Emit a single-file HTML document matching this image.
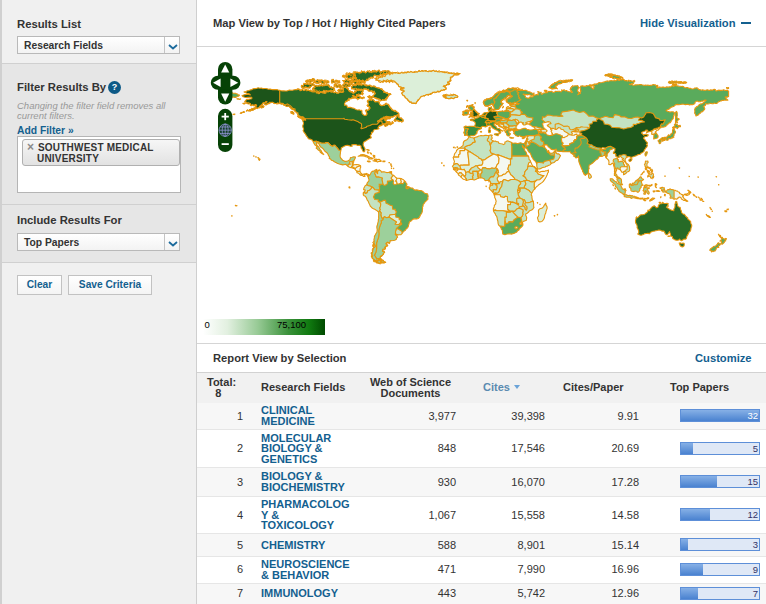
<!DOCTYPE html>
<html><head><meta charset="utf-8">
<style>
*{box-sizing:border-box;margin:0;padding:0}
html,body{width:766px;height:604px;overflow:hidden;background:#fff}
body{font-family:"Liberation Sans",Arial,sans-serif;font-size:11px;color:#333;position:relative}
#side{position:absolute;left:0;top:0;width:197px;height:604px;background:#f0f0f0;border-left:2px solid #d0d0d0;border-right:1px solid #cfcfcf}
.sec{position:absolute;left:0;width:194px}
.h{position:absolute;left:15px;font-weight:bold;font-size:11.3px;color:#333;white-space:nowrap}
.sel{position:absolute;left:15px;width:163px;height:18px;border:1px solid #b9b9b9;background:linear-gradient(#fff,#f3f3f3);font-weight:bold;font-size:10.3px;line-height:17px;padding-left:6px;color:#333}
.sel i{position:absolute;right:0;top:0;width:15px;height:16px;border-left:1px solid #c4c4c4}
.sel i svg{position:absolute;left:3px;top:7px}
.btn{position:absolute;height:20px;border:1px solid #c2c2c2;background:linear-gradient(#fff,#f4f4f4);color:#13608f;font-weight:bold;font-size:10.2px;line-height:18px;text-align:center}
#main{position:absolute;left:197px;top:0;width:569px;height:604px;background:#fff}
.t{position:absolute;font-weight:bold;font-size:11.2px;white-space:nowrap;color:#333}
.lnk{color:#13608f}
.hr{position:absolute;left:0;width:569px;height:1px;background:#d5d5d5}
table{position:absolute;left:0;top:372px;width:569px;border-collapse:collapse;font-size:11px}
th{font-weight:bold;background:#f1f1f1;height:30px;border-top:1px solid #d2d2d2;line-height:11px;vertical-align:middle;text-align:center}
td{vertical-align:middle;border-bottom:1px solid #e6e6e6;line-height:10.5px;font-size:11px}
tr.o td{background:#f7f7f7}
td.n{text-align:right}
td a{color:#13608f;font-weight:bold;text-decoration:none;font-size:11px}
.bar{position:relative;width:80px;height:13px;border:1px solid #5d8fd8;background:#dfe8f6;margin-left:35px}
.bar b{position:absolute;left:0;top:0;height:11px;background:linear-gradient(#86b0e6,#4a82d0)}
.bar span{position:absolute;right:1px;top:0;font-size:9.5px;line-height:12px;color:#336;font-weight:normal}
</style></head><body>
<div id="side">
 <div class="sec" style="top:0;height:64px;background:#f0f0f0;border-bottom:1px solid #d0d0d0"></div>
 <div class="sec" style="top:64px;height:141px;background:#e6e6e6;border-bottom:1px solid #d0d0d0"></div>
 <div class="sec" style="top:205px;height:58px;background:#e6e6e6;border-bottom:1px solid #d0d0d0"></div>
 <div class="h" style="top:18px">Results List</div>
 <div class="sel" style="top:36px">Research Fields<i><svg width="10" height="6" viewBox="0 0 10 6"><path d="M1 1 L5 4.5 L9 1" fill="none" stroke="#1b6a9c" stroke-width="1.8"/></svg></i></div>
 <div class="h" style="top:81px">Filter Results By</div>
 <div style="position:absolute;left:106px;top:81px;width:13px;height:13px;border-radius:7px;background:#0d5a87;color:#fff;font-weight:bold;font-size:9px;line-height:13px;text-align:center">?</div>
 <div style="position:absolute;left:15px;top:101px;width:170px;font-style:italic;font-size:9.5px;line-height:10px;color:#999">Changing the filter field removes all current filters.</div>
 <div style="position:absolute;left:15px;top:125px;font-weight:bold;font-size:10.3px;color:#13608f">Add Filter »</div>
 <div style="position:absolute;left:15px;top:136px;width:164px;height:57px;background:#fff;border:1px solid #b5b5b5"></div>
 <div style="position:absolute;left:20px;top:139px;width:158px;height:27px;border:1px solid #b0b0b0;border-radius:3px;background:linear-gradient(#f6f6f6,#e2e2e2);font-weight:bold;font-size:10px;line-height:11px;color:#333;padding:2px 0 0 15px;letter-spacing:0.2px">SOUTHWEST MEDICAL<br><span style="margin-left:-1px">UNIVERSITY</span><span style="position:absolute;left:4px;top:2px;color:#8a8a8a;font-size:12px;font-weight:bold">×</span></div>
 <div class="h" style="top:214px">Include Results For</div>
 <div class="sel" style="top:233px">Top Papers<i><svg width="10" height="6" viewBox="0 0 10 6"><path d="M1 1 L5 4.5 L9 1" fill="none" stroke="#1b6a9c" stroke-width="1.8"/></svg></i></div>
 <div class="btn" style="left:15px;top:275px;width:45px">Clear</div>
 <div class="btn" style="left:66px;top:275px;width:84px">Save Criteria</div>
</div>
<div id="main">
 <div class="t" style="left:16px;top:17px">Map View by Top / Hot / Highly Cited Papers</div>
 <div class="t lnk" style="left:443px;top:17px">Hide Visualization</div>
 <div style="position:absolute;left:544px;top:22px;width:10px;height:2px;background:#13608f"></div>
 <div class="hr" style="top:46px"></div>
 <svg width="766" height="604" viewBox="0 0 766 604" style="position:absolute;left:-197px;top:0" stroke="#e6970e" stroke-width="1.1" stroke-linejoin="round"><defs><path id="p1" d="M242.0 95.7L243.6 95.0L245.1 94.6L246.9 94.5L248.6 94.4L250.4 94.9L249.4 93.9L248.3 93.5L246.8 93.2L245.3 92.6L244.1 91.9L245.8 91.7L247.3 90.7L249.0 90.6L250.4 89.9L251.7 89.7L253.2 88.8L254.8 88.6L256.5 88.5L258.1 87.8L259.7 88.3L261.4 88.0L262.6 88.6L264.3 88.5L265.9 88.5L267.2 88.7L268.4 89.2L269.9 89.1L271.3 89.4L272.7 89.6L274.0 89.6L275.5 89.5L276.8 89.6L278.2 90.1L279.7 90.2L281.2 90.7L282.5 90.9L283.9 90.8L285.3 91.0L286.9 91.0L288.1 90.5L289.6 90.1L290.9 90.2L292.6 90.2L294.3 89.7L295.8 89.5L296.9 89.8L297.9 88.8L298.8 89.3L299.3 89.2L300.2 90.8L301.4 90.3L302.1 89.4L303.8 90.4L304.9 89.9L305.9 89.1L306.8 89.8L307.7 90.4L309.1 90.5L309.7 90.7L310.9 90.0L311.8 91.8L313.1 90.3L314.3 91.8L315.4 91.2L316.3 90.9L317.5 92.1L316.1 92.7L317.3 91.6L318.3 93.4L319.0 93.7L319.9 92.9L320.9 92.3L321.8 91.5L323.1 92.6L324.0 93.3L325.4 92.9L325.9 93.1L325.9 91.6L326.7 90.5L327.8 91.0L328.7 91.3L329.7 90.9L331.1 91.3L332.4 91.1L333.0 91.7L334.3 92.7L335.5 91.8L336.6 93.2L337.4 93.0L337.8 93.3L339.2 92.7L339.7 92.1L340.6 91.6L341.9 92.2L342.7 92.0L342.6 91.4L343.4 90.3L343.5 88.9L343.3 88.5L342.0 88.0L342.8 86.7L344.1 86.9L345.1 87.3L346.1 87.6L346.9 88.6L348.2 88.8L348.2 89.6L348.9 90.5L350.3 90.7L350.3 91.7L351.2 91.8L352.3 91.5L352.9 93.0L353.8 93.0L354.9 92.7L354.5 91.3L356.0 91.7L356.6 90.3L357.3 89.9L358.2 90.6L359.0 89.7L360.7 90.9L361.5 89.9L362.1 89.8L363.2 90.8L362.9 91.7L361.5 92.4L362.7 93.0L363.2 93.4L362.5 94.9L361.4 94.0L360.1 94.8L358.6 94.9L357.4 95.2L356.6 94.5L356.6 95.6L356.0 96.7L354.5 96.2L353.3 96.7L352.4 95.5L353.3 96.5L354.6 97.0L355.2 97.3L354.2 98.0L353.1 98.0L352.6 98.2L351.5 98.3L350.3 98.7L348.8 98.9L348.7 100.2L347.5 100.0L346.9 101.5L345.5 101.4L345.2 102.7L344.5 103.5L344.5 105.2L345.7 105.1L346.8 105.3L347.2 106.5L347.5 107.7L348.8 107.3L350.3 107.4L352.1 107.9L353.8 108.3L355.2 109.1L356.6 109.7L358.0 110.0L359.2 109.8L360.6 110.5L361.8 110.3L362.0 111.7L362.0 113.2L362.8 114.2L363.6 114.9L365.0 115.5L366.4 115.1L367.0 113.9L366.7 112.7L366.4 111.5L365.4 110.8L366.1 109.8L367.4 110.2L368.4 110.1L369.2 109.3L369.0 108.2L369.8 107.4L368.8 106.6L367.6 106.4L367.1 105.2L368.2 105.0L368.7 103.6L368.0 103.1L367.8 102.1L367.2 101.2L367.8 100.2L369.2 100.3L370.3 99.4L371.3 100.3L372.2 99.1L373.7 100.0L374.6 101.6L375.9 101.9L376.9 101.4L378.0 101.6L379.4 102.1L379.5 103.2L379.7 104.5L380.7 105.0L381.4 105.6L382.3 105.4L383.8 104.9L384.6 105.2L385.0 103.9L386.0 103.1L386.1 104.2L387.4 104.2L388.6 104.7L389.1 105.2L389.5 106.3L389.9 107.6L390.9 108.3L391.6 108.4L391.8 109.9L393.0 110.0L393.8 110.8L394.6 111.2L395.8 111.0L396.8 111.6L397.2 112.2L398.3 112.8L398.9 113.7L398.6 115.0L397.5 114.8L396.5 115.2L395.1 115.7L394.1 116.2L393.0 117.1L391.8 117.1L390.7 117.6L389.6 117.3L388.8 116.9L387.5 116.6L386.6 116.2L386.0 116.5L384.7 117.8L383.9 117.1L383.0 117.9L382.5 118.3L381.1 118.4L381.2 120.0L379.7 120.1L378.5 120.7L377.6 121.6L377.8 120.9L379.0 120.8L380.3 120.2L381.1 119.6L381.9 119.2L382.7 118.6L383.9 118.5L385.1 119.2L385.7 117.9L386.7 118.5L387.0 119.6L385.8 120.3L384.6 120.1L386.0 120.7L386.3 121.6L386.7 122.6L387.5 123.3L389.1 123.0L390.2 123.2L391.6 123.4L392.3 122.4L392.3 121.5L392.9 122.4L393.3 122.9L392.7 123.6L391.6 124.0L390.5 124.9L389.2 124.3L388.1 124.8L387.3 125.1L386.1 126.0L385.3 126.4L384.3 125.4L384.8 124.3L385.5 123.8L386.7 123.9L385.6 123.3L384.6 124.0L383.2 124.1L382.5 125.0L381.8 125.1L380.9 125.9L379.5 125.4L379.0 126.1L378.0 127.6L379.0 128.7L376.9 129.3L374.8 129.5L373.4 130.4L373.1 131.9L372.0 132.7L371.3 132.2L371.7 133.6L370.9 134.9L370.2 135.4L370.6 136.0L371.3 137.7L369.6 138.5L367.8 139.6L366.0 140.8L364.8 141.5L363.6 142.3L363.1 144.4L363.4 145.8L364.2 147.3L364.9 148.4L365.0 149.5L364.6 151.6L363.3 151.7L362.5 150.2L362.0 149.0L361.1 148.1L361.1 146.2L359.4 145.1L357.6 145.5L355.9 144.5L353.8 144.6L351.7 144.8L352.2 146.3L350.3 146.2L348.9 145.6L347.3 145.2L345.7 145.5L344.1 146.2L342.8 147.0L341.3 147.8L341.2 149.1L340.8 150.6L340.5 152.2L340.3 153.8L340.1 155.4L340.2 156.9L340.8 158.2L341.8 159.2L342.7 160.3L343.8 160.7L344.8 161.4L346.5 161.2L348.2 160.8L349.9 159.6L350.5 157.5L352.1 157.2L353.8 156.7L355.5 157.1L355.1 158.4L354.5 159.6L353.8 161.0L353.6 162.4L353.2 163.4L352.6 164.6L353.4 164.9L354.5 164.7L356.6 164.6L358.7 164.7L360.6 165.8L360.7 167.2L360.1 168.6L360.0 170.0L359.9 171.4L360.8 172.8L361.8 173.9L362.9 174.4L365.0 173.9L366.4 173.4L367.6 174.1L368.7 174.6L368.0 176.5L367.4 175.4L365.7 174.3L364.5 175.2L365.0 176.4L363.6 176.5L362.2 175.2L361.0 175.4L359.9 174.7L358.5 173.2L356.9 172.8L356.9 171.4L355.7 170.1L354.5 168.7L353.1 168.3L351.0 167.6L349.6 167.2L348.0 166.5L346.8 165.2L345.5 164.2L343.9 164.7L342.7 164.9L341.0 164.4L339.2 164.0L338.0 163.6L337.1 163.2L335.8 162.4L334.3 161.7L333.1 160.8L331.5 160.3L330.6 159.1L329.2 158.5L329.6 156.8L328.6 155.9L328.0 154.3L327.2 153.0L325.9 152.0L324.5 150.9L323.8 149.6L322.4 148.1L321.1 147.4L320.3 146.4L319.3 145.1L318.9 143.7L317.8 143.0L316.4 142.6L316.5 144.4L317.5 145.9L318.9 147.1L319.3 148.3L320.0 149.3L321.0 150.3L321.5 151.6L322.4 152.9L323.8 154.6L322.7 154.1L321.6 153.2L320.3 152.3L319.6 150.6L318.4 150.2L317.5 149.2L316.1 148.0L317.1 146.9L316.2 145.8L315.1 145.1L314.5 144.1L313.7 143.0L313.1 141.6L312.4 140.3L311.2 139.5L309.9 139.1L308.4 138.8L307.6 137.2L306.4 135.9L305.6 134.2L304.7 133.2L303.8 131.9L303.1 130.6L303.6 129.6L303.5 128.4L302.8 127.0L302.8 125.5L303.5 124.0L303.5 122.6L302.9 121.2L302.5 119.6L303.2 119.9L304.5 120.0L305.6 120.1L305.2 118.7L304.6 118.3L303.6 117.7L303.4 117.0L302.1 116.9L301.1 117.4L299.7 115.9L298.6 116.0L298.3 115.3L297.9 113.9L298.0 112.9L296.5 112.8L295.9 111.5L295.1 111.4L294.8 110.8L294.2 109.8L293.0 109.7L291.8 109.2L290.9 108.3L290.5 107.7L289.7 107.1L288.8 106.3L288.1 106.2L287.3 106.4L286.0 106.0L284.6 105.3L283.5 105.1L283.1 103.8L281.5 104.1L280.3 103.8L279.0 103.5L277.9 102.9L276.9 103.2L275.5 103.5L274.3 103.3L273.7 102.7L272.7 102.4L271.5 102.5L270.2 102.9L269.2 102.4L269.2 103.6L268.1 103.5L267.2 104.3L266.1 104.9L265.0 104.6L264.4 103.9L265.0 102.8L265.7 101.8L267.1 101.8L266.0 102.6L264.7 102.9L263.6 102.8L262.4 103.5L262.2 104.6L261.5 104.9L260.8 105.2L260.8 106.5L259.8 106.0L259.0 107.8L258.1 107.8L257.1 108.5L256.2 107.8L255.3 109.0L253.8 109.5L253.2 110.2L251.8 110.1L250.5 110.3L249.6 111.0L248.3 110.8L247.0 110.2L246.4 111.1L247.3 110.4L249.0 110.6L249.7 109.6L250.6 109.5L251.4 109.4L252.5 108.8L253.0 108.4L254.5 107.7L255.2 108.3L256.0 107.0L255.6 106.1L256.7 105.3L255.6 104.5L254.1 106.0L253.2 105.2L252.3 105.0L251.5 105.7L250.4 105.4L250.7 104.9L250.4 103.6L248.9 103.9L247.9 103.9L246.9 103.1L246.2 102.0L245.3 102.0L244.8 101.3L246.2 100.0L246.6 99.3L248.4 99.4L250.0 99.0L251.8 98.7L251.8 97.4L250.5 97.3L249.0 97.3L247.5 97.4L246.2 97.5L244.8 97.3L243.2 96.8Z" fill-rule="evenodd" clip-rule="evenodd"/><clipPath id="c1"><use href="#p1"/></clipPath></defs>
<g clip-path="url(#c1)">
<use href="#p1" fill="#276b27" stroke="none"/>
<path d="M279.7 86.9L279.7 103.1L282.5 103.4L284.6 104.9L287.4 103.9L290.2 105.6L292.6 108.2L295.1 109.0L294.8 110.8L292.3 113.2L239.2 117.3L236.4 95.2L253.2 85.5Z" fill="#1c541a"/>
<path d="M300.7 118.7L343.8 118.7L343.8 118.2L344.6 119.2L348.2 119.7L351.7 120.1L353.1 119.8L358.3 121.8L358.7 122.2L360.1 122.9L361.5 123.9L361.7 127.0L360.8 128.2L361.5 128.8L366.4 127.3L366.4 126.6L369.9 125.4L372.4 124.3L376.9 124.3L378.6 122.5L380.1 121.0L381.8 121.1L382.1 123.2L383.2 124.1L383.9 124.8L386.0 131.2L373.4 154.7L339.9 153.4L341.0 150.7L338.5 150.0L337.8 148.5L336.4 147.1L335.0 145.3L333.6 145.3L332.9 146.4L330.8 145.5L328.0 142.6L325.6 142.6L325.6 143.2L321.7 143.2L316.5 141.3L313.1 141.6L310.5 143.7L297.9 131.2Z" fill="#1c541a"/>
<path d="M313.1 141.6L316.5 141.3L321.7 143.2L325.6 143.2L325.6 142.6L328.0 142.6L330.8 145.5L332.9 146.4L333.6 145.3L335.0 145.3L336.4 147.1L337.8 148.5L338.5 150.0L341.0 150.7L344.1 150.6L358.0 154.7L356.6 161.7L353.8 161.0L353.1 161.1L352.3 161.8L349.6 161.8L349.6 162.8L350.3 164.3L348.5 164.3L348.0 165.5L348.0 166.5L344.1 168.6L327.3 163.1L310.5 145.1Z" fill="#9dd09b"/>
<path d="M353.8 161.0L353.1 161.1L352.3 161.8L352.2 164.6L352.6 164.6L354.5 163.7L354.5 161.0Z" fill="#f4f8f0"/>
<path d="M352.3 161.8L349.6 161.8L349.6 162.8L350.3 164.3L348.5 164.3L348.0 165.5L348.0 166.5L349.6 168.6L350.9 167.6L351.9 166.7L352.2 166.0L353.4 164.9L352.6 164.6L352.2 164.6Z" fill="#dcefd9"/>
<path d="M350.9 167.6L351.9 166.7L353.1 167.2L354.1 167.3L354.1 168.2L353.1 168.9L350.6 168.3Z" fill="#f4f8f0"/>
<path d="M353.4 164.9L352.2 166.0L351.9 166.7L353.1 167.2L354.1 167.3L354.1 168.2L354.8 168.7L355.7 168.2L356.6 167.3L358.0 166.5L359.4 166.1L360.6 165.8L361.5 165.4L359.4 163.7L353.8 163.7Z" fill="#f4f8f0"/>
<path d="M354.8 168.7L355.7 168.2L356.6 167.3L358.0 166.5L359.4 166.1L360.6 165.8L361.5 166.5L360.8 171.5L359.9 171.5L358.5 171.4L357.1 171.2L355.9 171.4L353.8 169.0Z" fill="#f4f8f0"/>
<path d="M360.8 171.5L359.9 171.5L358.5 171.4L357.1 171.2L355.9 172.1L358.0 174.1L360.1 175.5L361.0 175.4L361.1 174.1L361.4 173.3L362.2 172.8Z" fill="#dcefd9"/>
<path d="M361.0 175.4L361.1 174.1L361.4 173.3L363.6 173.0L366.4 172.8L368.7 174.6L368.9 175.7L368.0 176.5L367.8 177.6L363.6 177.6L360.8 176.2Z" fill="#dcefd9"/>
</g>
<use href="#p1" fill="none"/>
<path d="M295.8 89.5L296.8 89.3L297.9 88.8M297.9 88.8L298.6 89.2L299.4 89.3L300.4 89.4L301.4 90.3M301.4 90.3L302.4 89.1L303.5 90.5L304.9 89.9M304.9 89.9L305.5 90.0L307.1 91.1L308.2 89.5L309.1 90.5M309.1 90.5L310.2 91.3L311.3 91.0L312.3 92.0L313.5 92.0L314.3 91.9L315.4 91.2M315.4 91.2L316.6 91.4L317.5 92.1M317.5 92.1L316.1 92.7M316.1 92.7L316.8 93.2L318.1 92.9L319.0 91.9L320.3 91.9L320.7 92.0L322.2 93.1L323.1 92.6M323.1 92.6L323.9 92.1L324.5 93.2L325.9 93.1M325.9 93.1L325.9 91.6M325.9 91.6L326.8 91.6L328.1 91.9L328.7 91.3M328.7 91.3L329.9 91.6L331.0 92.1L331.6 92.4L333.2 91.7L334.3 92.7M334.3 92.7L335.6 92.0L336.0 92.2L337.6 92.7L338.4 93.2L339.2 92.7M339.2 92.7L339.3 91.3L340.6 91.6M340.6 91.6L341.6 92.2L342.7 92.0M342.7 92.0L343.9 91.7L343.4 90.3M343.4 90.3L342.2 89.9L341.8 89.3L342.0 88.0M342.0 88.0L342.9 86.8L344.1 86.9M344.1 86.9L345.5 86.3L346.1 87.6M346.1 87.6L346.6 88.0L348.4 88.5L348.2 89.6M348.2 89.6L348.9 90.5M348.9 90.5L349.0 91.5L350.3 91.7M350.3 91.7L350.7 92.3L352.2 92.2L352.8 93.5L353.8 93.0M353.8 93.0L354.4 91.8L354.5 91.3M354.5 91.3L355.5 91.8L356.6 90.3M356.6 90.3L357.3 89.9M357.3 89.9L358.5 89.3L359.6 89.8L360.7 88.7L361.5 89.9M361.5 89.9L362.7 90.4L363.2 90.8M363.2 90.8L362.9 91.7M362.9 91.7L361.5 92.4M361.5 92.4L362.4 92.6L363.2 93.4M363.2 93.4L361.8 93.2L361.1 94.1L360.1 94.8M360.1 94.8L358.7 93.8L357.9 94.5L356.6 94.5M356.6 94.5L356.6 95.6M356.6 95.6L355.9 96.8L354.5 96.2M354.5 96.2L353.0 96.0L352.4 95.5M352.4 95.5L353.6 95.0L353.9 97.4L355.2 97.3M355.2 97.3L354.2 98.2L353.1 98.0M353.1 98.0L351.7 97.4L351.6 98.9L350.3 98.7M350.3 98.7L348.7 98.1L349.3 100.6L347.5 100.0M347.5 100.0L346.8 101.8L345.5 101.4M365.0 115.5L366.4 115.1M366.4 115.1L367.0 113.9M367.0 113.9L366.3 112.6L366.4 111.5M366.4 111.5L365.4 110.8M365.4 110.8L366.5 109.9L367.7 110.4L368.2 109.6L369.2 109.3M369.2 109.3L370.2 108.6L369.8 107.4M369.8 107.4L369.2 106.0L367.6 106.1L367.1 105.2M367.1 105.2L367.9 104.6L368.7 103.6M368.7 103.6L368.3 103.0L367.8 102.1M367.8 102.1L368.2 101.0L367.8 100.2M367.8 100.2L369.1 99.9L369.9 99.7L371.3 100.3M371.3 100.3L372.8 99.7L373.7 100.0M373.7 100.0L374.5 100.6L375.7 101.7L376.9 101.4M376.9 101.4L378.3 101.9L379.4 102.1M379.4 102.1L379.1 103.2L379.7 104.5M379.7 104.5L380.3 105.4L381.4 105.6M381.4 105.6L382.7 105.6L383.8 104.9L384.6 105.2M384.6 105.2L385.8 104.1L386.0 103.1M386.0 103.1L386.7 103.3L387.4 104.2M387.4 104.2L388.5 104.1L388.4 105.9L389.5 106.3M389.5 106.3L390.5 106.9L390.9 108.3M390.9 108.3L391.5 109.0L392.1 109.6L393.0 110.0M393.0 110.0L393.5 110.6L395.2 110.1L395.8 111.0M395.8 111.0L396.3 111.7L397.2 112.2M397.2 112.2L398.1 113.2L398.9 113.7M398.9 113.7L398.6 115.0M398.6 115.0L397.3 114.5L396.3 115.6L395.1 115.7M395.1 115.7L393.6 115.9L393.0 117.1M393.0 117.1L391.8 116.5L390.6 116.6L389.6 116.6L388.8 116.9M388.8 116.9L387.6 116.9L387.0 116.7L385.7 116.8L385.0 117.0L383.9 117.1M383.9 117.1L383.0 117.4L382.5 118.3M382.5 118.3L381.9 119.2L380.3 118.9L379.7 120.1M379.7 120.1L378.6 120.8L377.6 121.6M377.6 121.6L377.9 120.8L379.0 120.8M379.0 120.8L380.1 119.7L381.1 119.6M381.1 119.6L382.2 119.7L383.2 118.7L383.9 118.5M383.9 118.5L384.8 118.7L385.6 118.3L386.7 118.5M386.7 118.5L387.0 119.6M387.0 119.6L385.6 119.1L384.6 120.1M384.6 120.1L386.0 120.7M386.0 120.7L386.3 121.6M386.3 121.6L386.7 122.6M386.7 122.6L388.2 122.5L389.1 123.2L390.2 123.2M390.2 123.2L391.6 123.4M391.6 123.4L392.2 122.5L392.3 121.5M392.3 121.5L392.9 122.3L393.3 122.9M393.3 122.9L391.9 123.1L391.6 124.0M391.6 124.0L390.0 123.6L389.1 123.9L388.1 124.8M388.1 124.8L387.3 125.9L386.0 125.5L385.3 126.4M384.3 125.4L385.7 125.2L385.4 124.0L386.7 123.9M386.7 123.9L385.5 123.2L384.6 124.0M384.6 124.0L383.2 124.1M383.2 124.1L382.4 124.1L381.8 125.1M381.8 125.1L380.5 124.9L380.2 126.0L379.0 126.1M302.5 119.6L303.4 120.1L304.7 119.0L305.6 120.1M305.6 120.1L305.2 118.7M305.2 118.7L304.6 118.3M304.6 118.3L303.7 118.3L303.0 117.1L302.1 116.9M302.1 116.9L300.8 117.0L299.9 117.3L298.6 116.0M298.6 116.0L297.6 115.1L297.9 113.9M297.9 113.9L297.4 113.6L296.2 112.7L295.7 112.0L295.1 111.4M295.1 111.4L294.8 110.8M294.8 110.8L294.1 109.9L293.0 109.7M293.0 109.7L292.6 108.4L290.9 108.3M290.9 108.3L290.0 107.4L289.6 107.1L288.8 106.3M288.8 106.3L288.2 105.5L287.0 106.6L286.0 106.0M286.0 106.0L284.6 105.3M284.6 105.3L284.0 104.2L283.0 103.6L281.5 104.1M281.5 104.1L280.3 102.9L279.0 103.5M279.0 103.5L278.1 103.9L276.7 104.0L275.5 103.5M275.5 103.5L274.6 103.6L273.4 103.4L272.7 102.4M272.7 102.4L271.2 102.3L270.5 102.3L269.2 102.4M269.2 102.4L269.2 103.6M269.2 103.6L268.5 103.6L266.8 103.8L266.2 103.8L265.0 104.6M265.0 104.6L264.2 103.5L265.0 102.8M265.0 102.8L266.1 101.7L267.1 101.8M267.1 101.8L266.0 101.2L265.0 103.4L263.6 102.8M263.6 102.8L262.6 103.1L262.9 104.4L261.5 104.9M261.5 104.9L261.6 105.6L260.8 106.5M260.8 106.5L260.0 107.9L259.2 107.8L258.1 107.8M258.1 107.8L257.2 108.7L255.7 107.9L255.3 109.0M255.3 109.0L253.7 108.9L253.2 110.1L251.8 110.1M251.8 110.1L251.0 111.2L249.6 110.8L248.3 110.8M248.3 110.8L247.5 110.1L246.4 111.1M246.4 111.1L247.6 109.9L249.1 110.9L249.7 109.6M249.7 109.6L250.4 109.8L251.6 108.2L252.5 108.8M252.5 108.8L253.5 108.9L254.5 107.9L255.3 107.4L256.0 107.0M256.0 107.0L255.9 106.0L256.7 105.3M256.7 105.3L255.6 105.9L254.5 104.8L253.2 105.2M253.2 105.2L252.4 104.6L251.1 105.5L250.4 105.4M250.4 105.4L250.6 104.8L250.4 103.6M250.4 103.6L249.3 103.0L248.3 102.4L246.9 103.1M246.9 103.1L245.7 103.4L245.2 102.7L244.8 101.3" fill="none" stroke-width="1"/>
<defs><path id="p2" d="M368.7 174.6L369.5 175.5L370.6 173.7L371.3 172.1L372.3 171.4L374.4 170.9L375.3 169.9L376.6 169.4L377.2 170.3L376.4 171.4L376.8 172.8L377.6 173.7L377.6 171.6L378.2 170.8L379.0 169.8L380.2 170.5L381.1 171.1L381.5 172.1L383.1 171.7L384.6 171.9L386.7 172.6L388.4 172.5L390.2 171.8L389.5 172.8L391.6 173.2L391.9 174.7L393.3 175.1L394.4 176.0L395.5 177.2L396.9 178.3L398.3 178.3L399.3 178.4L401.4 178.6L402.5 179.3L403.5 179.8L404.6 180.8L405.6 181.8L406.1 183.0L407.0 184.2L406.3 186.2L407.5 186.8L409.1 186.9L409.8 187.6L411.0 188.1L412.6 188.0L413.6 189.2L415.0 190.1L416.3 189.9L417.6 190.1L418.9 190.6L421.0 190.5L422.0 191.0L423.1 191.7L424.0 192.6L424.9 193.2L426.3 193.6L427.5 193.8L427.9 195.1L428.2 196.6L427.7 197.8L428.0 199.1L427.0 200.1L426.3 200.9L425.2 201.8L424.2 203.4L423.1 204.6L423.1 206.0L422.4 207.4L422.6 208.7L422.4 210.0L422.4 211.3L421.8 213.0L421.0 214.3L420.1 215.7L419.6 217.1L418.2 218.5L416.6 218.9L414.7 218.7L413.2 219.1L412.2 219.8L411.0 221.1L409.4 221.9L408.9 224.0L408.5 225.3L408.4 226.3L407.6 227.8L406.3 228.8L405.4 230.2L404.2 230.9L403.2 232.0L402.2 233.3L400.7 234.8L399.4 234.8L398.3 234.9L396.8 234.6L395.5 233.7L395.2 234.5L396.9 235.8L397.6 237.2L396.6 238.2L396.2 239.5L394.7 240.2L393.0 240.5L391.5 240.7L390.2 240.5L390.1 241.7L389.8 242.7L389.3 243.6L387.6 242.1L387.1 242.5L386.0 243.4L386.7 244.5L387.7 245.2L387.1 245.9L386.0 246.2L385.5 247.3L385.5 248.3L385.3 248.9L384.7 249.2L382.9 249.1L382.5 250.3L382.6 251.3L384.0 251.1L384.6 252.4L383.3 253.3L383.4 254.4L382.5 255.2L381.3 255.8L380.4 256.5L380.2 257.8L381.1 259.0L379.7 259.3L378.5 259.6L377.8 260.3L376.9 261.1L376.0 261.2L374.7 260.9L374.1 260.0L373.2 258.9L372.4 258.7L372.0 257.2L371.3 256.1L372.0 255.1L371.3 253.8L371.1 252.9L372.3 252.2L372.7 251.0L372.9 250.1L373.3 248.8L373.4 248.1L374.1 247.5L375.0 246.5L375.2 246.2L374.8 244.8L373.4 244.5L373.4 243.4L374.0 242.9L373.9 241.9L374.1 240.6L373.9 239.3L374.4 237.8L374.4 236.4L375.2 235.1L376.0 233.5L376.9 232.3L377.1 230.8L377.2 229.5L376.9 228.1L376.8 226.7L377.3 225.3L377.6 224.0L377.9 222.7L378.3 221.4L378.3 219.8L378.8 218.4L378.6 217.1L378.7 215.7L378.7 213.9L378.6 212.1L377.7 211.2L376.9 210.6L375.9 210.0L374.6 209.1L373.4 208.8L372.2 208.1L371.3 207.1L370.2 206.0L369.7 204.6L368.9 203.2L368.5 202.0L367.9 200.8L367.1 199.8L366.6 198.4L366.1 197.3L365.3 196.3L364.1 195.8L363.3 194.9L363.2 192.8L364.6 191.3L365.3 190.1L363.6 189.6L363.9 188.0L364.5 187.0L365.0 185.9L366.7 184.7L367.1 183.1L367.8 182.1L368.8 181.1L369.0 179.6L368.5 178.3L368.0 176.5Z" fill-rule="evenodd" clip-rule="evenodd"/><clipPath id="c2"><use href="#p2"/></clipPath></defs>
<g clip-path="url(#c2)">
<use href="#p2" fill="#5aab5c" stroke="none"/>
<path d="M368.7 174.6L368.9 175.7L368.0 176.5L365.0 179.7L365.0 185.2L366.7 184.7L368.5 185.8L370.6 186.2L371.6 186.7L373.4 188.0L374.8 189.8L379.0 190.1L379.0 192.4L379.7 188.0L379.0 185.9L380.1 185.2L379.0 184.2L383.2 184.2L382.8 183.1L382.1 179.7L382.5 178.0L379.0 176.9L376.2 176.9L375.5 174.8L374.8 173.7L375.5 171.4L377.2 170.3L377.6 168.6L369.2 170.0Z" fill="#9dd09b"/>
<path d="M377.2 170.3L375.5 171.4L374.8 173.7L375.5 174.8L376.2 176.9L379.0 176.9L382.5 178.0L382.1 179.7L382.8 183.1L383.2 184.2L383.9 185.2L385.3 185.2L387.4 183.8L387.4 181.1L389.2 181.1L391.6 180.4L392.0 179.4L391.2 178.3L391.6 177.2L392.6 176.6L393.0 175.4L393.3 175.1L394.4 172.8L390.2 170.0L379.0 168.6Z" fill="#c4e3c2"/>
<path d="M393.3 175.1L393.0 175.4L392.6 176.6L391.6 177.2L391.2 178.3L392.0 179.4L393.0 179.7L393.3 180.6L393.7 181.5L393.0 183.1L394.4 184.8L395.8 184.5L397.2 183.8L396.8 182.0L395.8 181.1L396.5 179.7L396.9 178.3L397.2 176.9L395.8 174.8Z" fill="#f4f8f0"/>
<path d="M396.9 178.3L396.5 179.7L395.8 181.1L396.8 182.0L397.2 183.8L398.6 184.0L400.7 183.4L401.4 181.8L400.7 179.7L401.4 178.6L401.4 176.9L397.2 176.9Z" fill="#f4f8f0"/>
<path d="M401.4 178.6L400.7 179.7L401.4 181.8L400.7 183.4L402.8 183.6L403.5 183.1L404.6 180.8L405.6 179.7L402.8 177.6Z" fill="#f4f8f0"/>
<path d="M366.7 184.7L368.5 185.8L370.6 186.2L371.6 186.7L371.3 188.7L369.6 190.2L367.8 190.8L367.1 192.8L365.7 193.5L364.6 192.7L364.6 191.3L362.2 190.8L362.2 185.2L365.0 183.8Z" fill="#c4e3c2"/>
<path d="M364.6 191.3L364.6 192.7L365.7 193.5L367.1 192.8L367.8 190.8L369.6 190.2L371.3 188.7L371.6 186.7L373.4 188.0L374.8 189.8L379.0 190.1L379.0 192.4L375.1 193.5L373.4 197.0L374.8 199.5L378.3 199.8L378.2 201.8L379.7 201.8L380.8 203.9L380.4 206.7L379.7 208.1L380.4 209.5L379.6 210.8L378.6 212.1L374.8 212.9L360.8 197.7Z" fill="#c4e3c2"/>
<path d="M379.7 201.8L380.8 203.9L380.4 206.7L379.7 208.1L380.4 209.5L379.6 210.8L381.1 212.9L380.8 215.0L381.9 218.2L383.2 218.2L384.3 216.8L386.7 217.8L389.1 217.1L389.9 215.0L395.5 214.3L396.4 211.5L395.2 210.6L395.4 209.2L392.7 209.2L392.3 205.7L390.2 205.3L388.1 204.1L386.0 203.2L385.6 200.4L383.9 200.3L381.1 201.8Z" fill="#c4e3c2"/>
<path d="M389.9 215.0L395.5 214.3L395.9 217.1L398.9 217.5L399.3 219.8L401.0 219.8L400.5 222.1L400.4 223.3L398.9 224.5L395.0 224.3L396.4 221.9L393.0 219.8L389.1 217.1Z" fill="#dcefd9"/>
<path d="M395.5 233.7L395.5 231.6L396.4 228.4L398.6 229.3L401.7 231.2L402.2 233.3L404.2 235.1L398.6 236.5L394.4 234.4Z" fill="#c4e3c2"/>
<path d="M383.2 218.2L384.3 216.8L386.7 217.8L389.1 217.1L393.0 219.8L396.4 221.9L395.0 224.3L398.9 224.5L400.4 223.3L400.5 222.1L401.7 223.7L401.7 224.3L399.3 225.8L396.4 228.4L395.5 231.6L395.5 233.7L400.0 237.8L393.0 260.0L381.2 259.2L379.7 258.9L376.4 258.6L375.5 256.8L374.4 255.2L375.8 252.4L376.6 248.9L376.6 246.2L376.6 242.7L377.6 239.9L378.6 237.2L379.0 233.7L378.7 230.9L379.3 228.1L380.4 224.7L381.4 222.6L381.1 220.5L382.8 219.8Z" fill="#9dd09b"/>
<path d="M378.6 212.1L379.6 210.8L381.1 212.9L380.8 215.0L381.9 218.2L383.2 218.2L382.8 219.8L381.1 220.5L381.4 222.6L380.4 224.7L379.3 228.1L378.7 230.9L379.0 233.7L378.6 237.2L377.6 239.9L376.6 242.7L376.6 246.2L376.6 248.9L375.8 252.4L374.4 255.2L375.5 256.8L376.4 258.6L379.7 258.9L381.2 259.2L381.8 262.8L367.8 262.8L367.8 242.0L374.8 211.5Z" fill="#9dd09b"/>
</g>
<use href="#p2" fill="none"/>
<path d="M389.8 242.7L389.1 242.6L388.1 242.5L387.0 243.3L386.0 243.4M386.0 243.4L386.4 245.2L387.7 245.2M387.7 245.2L387.5 246.2L386.0 246.2M386.0 246.2L384.8 246.7L384.4 247.9L385.3 248.9M385.3 248.9L384.2 249.1L383.8 249.9L382.5 250.3M382.5 250.3L382.7 251.5L384.3 251.6L384.6 252.4M384.6 252.4L383.9 253.5L383.1 254.2L382.5 255.2M382.5 255.2L382.0 256.4L380.4 256.5M380.4 256.5L380.3 257.5L381.1 259.0M381.1 259.0L379.7 259.3M379.7 259.3L378.8 260.6L377.8 260.3M377.8 260.3L376.9 261.1M376.9 261.1L376.0 261.7L375.0 260.3L374.1 260.0M374.1 260.0L373.4 259.0L372.1 258.2L372.0 257.2M372.0 257.2L372.8 255.9L372.5 254.7L371.3 253.8M371.3 253.8L372.5 253.4L372.5 252.4L372.7 251.0M372.7 251.0L372.2 250.2L372.5 248.9L373.0 247.8L374.1 247.5M374.1 247.5L375.1 247.2L375.3 245.8L374.8 244.8M374.8 244.8L374.5 243.3L373.4 243.4M373.4 243.4L372.7 242.2L374.2 241.5L374.1 240.6" fill="none" stroke-width="1"/>
<path d="M390.9 94.4L389.1 94.5L388.3 95.5L388.1 96.6L387.1 97.1L387.1 98.7L385.8 98.7L385.3 99.1L386.3 99.9L385.1 99.4L384.2 100.2L382.7 99.9L381.8 100.5L380.7 100.4L380.3 99.6L379.0 98.9L378.0 99.0L376.9 98.9L376.2 97.8L375.5 97.8L374.1 97.4L372.8 96.9L371.7 98.5L370.4 97.4L370.1 98.6L368.5 97.5L367.8 96.6L369.1 96.5L370.0 96.8L371.6 96.7L372.8 97.1L373.4 95.9L374.1 94.5L374.5 93.4L374.8 92.4L374.1 91.0L372.8 92.9L371.9 90.5L370.6 91.0L369.4 91.2L368.4 91.0L368.7 89.2L367.1 89.6L366.3 88.7L364.9 88.9L363.8 88.9L363.0 90.1L362.2 89.8L361.6 89.0L359.9 89.9L359.0 88.8L358.0 89.6L357.1 89.3L355.8 90.1L354.7 90.0L354.1 89.3L353.1 88.8L351.5 89.0L351.7 87.8L351.3 86.6L352.7 85.9L353.1 84.8L354.5 85.0L355.1 85.2L356.4 85.1L356.8 83.9L358.0 84.5L359.5 84.8L360.1 84.3L361.2 85.3L362.4 84.1L363.6 84.4L364.5 85.2L365.4 85.1L366.9 84.9L367.8 85.6L368.5 85.6L370.0 84.9L370.6 86.2L371.7 86.9L373.1 86.0L374.1 85.8L375.3 86.9L376.2 87.4L377.1 87.8L378.3 88.2L379.6 88.3L380.4 88.7L381.5 89.3L382.6 89.4L382.5 90.3L383.9 90.8L383.9 92.4L385.3 91.9L385.8 92.8L387.1 92.4L388.1 93.5L389.2 94.6L390.4 93.8Z" fill="#276b27"/>
<path d="M390.9 94.4L390.1 94.9L389.3 95.6L388.1 96.6M388.1 96.6L387.6 97.9L386.6 97.3L385.8 98.1L385.3 99.1M385.3 99.1L386.3 99.9M386.3 99.9L385.1 100.2L383.6 100.4L382.7 99.1L381.8 100.5M381.8 100.5L380.2 101.2L380.3 99.9L378.5 100.3L377.9 98.0L376.9 98.9M376.9 98.9L375.9 98.3L375.1 98.7L374.1 97.4M374.1 97.4L373.0 96.5L371.9 97.0L370.7 96.5L369.9 97.7L368.5 97.5M368.5 97.5L367.8 96.6M367.8 96.6L368.5 95.9L370.0 95.5L371.2 96.8L372.4 95.7L373.4 95.9M373.4 95.9L374.1 94.5M374.1 94.5L375.6 93.9L374.8 92.4M374.8 92.4L374.0 92.5L372.8 91.4L371.7 91.6L370.6 91.0M370.6 91.0L369.8 91.0L369.2 90.7L367.9 90.7L367.1 89.6M367.1 89.6L366.3 89.6L365.2 89.3L363.9 88.7L363.5 89.7L362.2 89.8M362.2 89.8L360.8 89.4L360.2 89.2L358.7 89.9L358.0 89.6M358.0 89.6L357.3 88.7L355.9 88.3L355.1 88.3L353.8 88.6L353.1 88.8M353.1 88.8L352.8 88.4L351.7 87.8M351.7 87.8L351.3 86.6M351.3 86.6L352.5 86.1L353.1 84.8M353.1 84.8L353.9 85.3L355.0 85.9L356.2 85.6L356.6 84.0L358.0 84.5M358.0 84.5L359.1 85.3L360.0 83.7L361.2 84.9L362.6 84.8L363.6 84.4M363.6 84.4L365.0 83.6L365.4 85.9L366.4 86.1L367.8 85.6M367.8 85.6L368.4 85.4L369.4 85.3L370.6 86.2M370.6 86.2L371.6 85.6L372.5 86.5L374.4 86.9L375.2 86.2L376.2 87.4M376.2 87.4L377.5 87.5L378.7 87.5L379.3 87.9L380.4 88.7M380.4 88.7L381.9 88.6L381.6 89.7L382.5 90.3M382.5 90.3L384.1 91.3L383.9 92.4M383.9 92.4L384.8 92.0L386.0 93.4L386.8 93.6L388.1 93.5M388.1 93.5L388.5 94.7L389.9 93.0L390.9 94.4" fill="none" stroke-width="1"/>
<path d="M313.3 87.6L314.6 87.6L314.1 86.1L315.1 85.8L316.1 85.1L316.8 85.7L317.8 85.8L319.0 85.4L320.3 85.8L321.7 85.5L322.5 86.0L323.5 85.4L324.4 85.7L325.9 85.2L326.9 84.8L328.2 85.1L329.4 85.5L329.6 86.4L330.1 87.6L331.6 86.8L331.9 88.4L333.4 87.2L334.3 88.3L333.7 89.5L335.0 90.2L333.9 89.9L332.9 91.2L331.5 90.2L331.0 90.1L329.2 90.9L328.3 92.0L327.3 91.0L326.2 90.6L325.5 91.6L323.8 90.3L323.1 91.5L322.5 92.4L320.8 91.7L319.8 92.0L318.9 92.4L318.2 91.5L316.7 91.9L316.2 91.8L315.0 91.4L314.0 90.6L314.3 89.4L312.6 89.0Z" fill="#276b27"/>
<path d="M313.3 87.6L314.8 87.8L315.7 86.9L316.4 86.2L316.1 85.1M316.1 85.1L316.8 86.4L318.4 85.9L319.6 86.2L320.3 85.8M320.3 85.8L321.7 85.5L322.4 86.0L323.6 84.7L325.0 84.8L325.9 85.2M325.9 85.2L327.3 85.6L328.4 84.2L329.4 85.5M329.4 85.5L328.6 86.6L330.1 87.6M330.1 87.6L331.1 87.1L332.2 87.6L333.3 87.5L334.3 88.3M334.3 88.3L333.7 89.7L335.0 90.2M335.0 90.2L333.8 89.7L332.9 91.2M332.9 91.2L332.2 90.1L330.8 91.6L329.2 91.3L328.6 90.7L327.3 91.0M327.3 91.0L325.8 90.4L325.1 91.1L323.9 92.6L323.1 91.5M323.1 91.5L321.7 91.4L321.4 92.1L320.2 91.5L319.5 90.7L318.2 91.5M318.2 91.5L317.3 91.1L316.5 90.0L315.1 90.1L314.0 90.6M314.0 90.6L312.5 89.9L312.6 89.0M312.6 89.0L313.3 87.6" fill="none" stroke-width="1"/>
<path d="M301.4 87.0L301.4 85.5L303.5 85.8L303.5 84.4L304.0 84.2L305.0 83.3L307.2 84.2L307.7 83.4L309.1 84.5L310.4 82.8L310.5 84.2L312.4 83.5L313.3 83.8L314.0 84.7L314.7 85.2L313.5 85.1L312.5 85.4L311.8 85.9L310.5 86.9L309.8 88.2L308.3 87.5L307.0 87.7L305.7 86.7L304.9 88.1L304.2 88.0L303.0 88.7L302.5 87.2Z" fill="#276b27"/>
<path d="M301.4 87.0L301.6 85.2L302.9 85.8L303.5 84.4M303.5 84.4L303.8 83.1L305.9 84.7L306.2 84.1L307.7 83.4M307.7 83.4L309.3 84.9L310.0 83.4L310.4 84.8L312.6 83.7L313.3 83.8M313.3 83.8L313.5 84.4L314.7 85.2M314.7 85.2L313.8 85.2L312.1 85.4L311.4 86.2L310.5 86.9M310.5 86.9L309.5 86.0L308.4 88.3L307.0 87.7M307.0 87.7L305.6 88.0L304.7 86.9L304.2 88.0M304.2 88.0L303.8 86.6L302.3 88.5L301.4 87.0" fill="none" stroke-width="1"/>
<path d="M351.0 80.6L352.6 79.4L353.2 82.2L354.5 82.1L355.4 82.2L356.6 80.9L357.3 79.5L359.1 81.7L359.2 79.5L360.2 80.7L362.4 81.4L363.0 80.3L363.7 82.0L365.0 81.1L366.0 80.7L367.1 80.6L367.8 80.0L368.1 78.9L369.1 78.0L370.6 77.9L370.9 77.0L373.4 77.8L373.4 76.5L374.7 75.0L375.0 75.8L376.9 75.8L377.3 75.5L379.1 75.9L379.6 75.2L380.6 73.8L381.8 75.1L383.1 73.7L383.4 75.2L385.0 74.0L385.4 74.6L386.7 72.5L388.4 74.0L388.8 73.3L389.6 72.9L390.2 72.3L389.0 70.8L387.8 70.8L387.0 70.9L386.4 71.1L384.9 70.6L383.4 72.3L383.1 70.7L381.8 71.6L380.2 72.1L379.2 70.1L379.3 70.4L378.3 70.8L376.4 71.6L375.7 70.7L374.4 71.4L374.0 72.2L372.4 70.5L372.0 72.7L370.6 71.5L369.6 72.3L368.3 71.5L367.7 70.9L366.0 72.4L365.4 73.0L364.3 71.2L363.4 72.1L361.8 71.4L361.5 72.7L360.1 72.5L359.2 72.4L358.0 72.5L356.8 72.8L355.3 71.8L354.9 74.4L354.3 72.0L353.5 74.6L352.2 74.0L351.0 73.7L349.4 72.9L349.1 73.2L348.2 74.4L349.7 75.5L350.4 76.2L352.1 75.3L352.2 75.7L353.8 75.1L355.6 75.4L355.2 76.5L355.0 78.2L356.6 77.9L356.4 78.9L355.1 78.8L353.8 78.6L353.5 79.5L352.4 79.5L352.4 80.7Z" fill="#276b27"/>
<path d="M351.0 80.6L352.7 79.9L352.7 81.7L354.1 81.1L355.9 80.1L356.6 80.9M356.6 80.9L357.8 82.4L359.2 80.7L359.3 79.4L360.7 80.6L361.5 80.6L363.0 79.9L363.6 82.2L365.0 81.1M365.0 81.1L366.1 80.6L366.6 79.0L367.8 80.0M367.8 80.0L369.1 80.1L369.7 79.5L370.6 77.9M370.6 77.9L372.3 78.3L372.7 78.5L373.4 76.5M373.4 76.5L374.7 74.8L375.2 75.0L377.2 76.7L377.0 75.2L378.7 76.6L379.3 76.1L380.5 75.8L381.8 75.1M381.8 75.1L382.7 75.2L383.2 73.1L385.1 73.6L385.1 73.2L386.6 74.9L387.7 74.0L388.8 73.3M388.8 73.3L389.7 73.5L390.2 72.3M390.2 72.3L389.3 73.9L387.7 70.8L387.4 71.6L385.5 71.1L385.5 71.3L384.2 70.8L382.9 71.2L381.8 71.6M381.8 71.6L380.9 73.2L380.3 73.1L378.6 70.0L377.4 71.0L377.2 71.5L376.1 72.6L374.3 70.0L373.5 70.5L372.7 70.5L371.2 73.0L370.6 71.5M370.6 71.5L369.3 70.2L368.3 71.9L367.6 71.3L366.0 72.9L365.8 72.5L363.8 71.4L363.1 71.7L362.0 71.2L361.4 70.6L360.7 73.0L359.4 73.9L358.0 72.5M358.0 72.5L356.8 71.6L356.1 72.4L355.4 72.2L353.4 71.7L352.7 74.1L352.5 74.5L351.0 73.7M351.0 73.7L349.6 72.9L349.3 75.2L348.2 74.4M348.2 74.4L349.1 73.0L350.2 74.2L351.1 74.0L352.1 74.9L353.8 75.1M353.8 75.1L355.5 74.9L355.2 76.5M355.2 76.5L354.8 77.7L356.6 77.9M356.6 77.9L355.9 79.5L354.1 76.9L353.8 78.6M353.8 78.6L353.3 79.6L352.4 79.5M352.4 79.5L351.4 79.4L351.0 80.6" fill="none" stroke-width="1"/>
<path d="M342.7 80.6L343.9 81.4L345.1 80.2L346.1 79.6L347.0 79.9L348.2 80.4L350.0 80.1L350.7 80.4L350.8 82.2L352.4 81.9L354.0 81.8L354.4 81.3L355.8 81.5L356.0 81.7L357.0 81.7L358.1 82.2L359.4 81.6L360.3 81.4L361.1 81.1L363.3 81.4L363.5 80.7L365.0 81.9L365.0 83.1L364.4 82.6L362.5 82.1L362.4 81.8L361.0 83.4L359.2 82.8L359.3 84.1L357.3 83.5L356.6 83.4L356.1 84.0L354.4 83.9L353.8 82.5L353.0 82.1L351.4 84.7L350.6 82.2L348.8 83.6L348.2 83.1L347.0 81.9L345.7 83.4L345.2 83.0L344.1 82.0L343.8 80.6Z" fill="#276b27"/>
<path d="M342.7 80.6L343.9 81.4L345.5 80.7L345.4 79.1L347.2 79.0L348.2 80.4M348.2 80.4L349.0 81.5L350.1 81.0L351.8 80.9L352.4 81.9M352.4 81.9L353.9 80.4L354.0 81.3L355.5 80.2L356.5 81.9L357.0 80.6L358.4 80.1L359.4 81.6M359.4 81.6L360.0 81.8L361.3 81.8L363.0 80.4L363.8 83.3L365.0 81.9M365.0 81.9L365.0 83.1M365.0 83.1L363.5 81.9L362.6 82.6L362.1 82.8L360.7 83.8L359.3 82.6L358.7 84.5L357.1 82.1L356.6 83.4M356.6 83.4L355.7 84.7L354.3 84.8L353.0 84.9L351.8 84.6L351.9 84.7L350.5 82.9L348.8 83.1L348.2 83.1M348.2 83.1L346.8 82.3L346.3 82.4L344.4 83.6L344.1 82.0M344.1 82.0L344.4 80.5L342.7 80.6" fill="none" stroke-width="1"/>
<path d="M342.7 75.8L343.6 75.1L344.5 76.7L346.0 75.3L346.3 73.8L347.5 75.8L348.2 74.0L349.2 74.8L350.4 73.7L352.2 74.0L353.2 73.9L353.8 75.4L355.5 75.2L355.2 77.2L354.1 77.1L353.2 76.3L351.7 79.0L351.4 79.0L349.6 78.3L348.5 79.2L347.3 77.4L346.0 76.8L345.7 76.8L344.1 77.2L342.4 76.8Z" fill="#276b27"/>
<path d="M342.7 75.8L343.6 76.5L344.3 75.2L346.4 76.2L346.0 73.0L347.5 72.8L348.2 74.0M348.2 74.0L349.8 74.8L350.6 76.0L351.8 75.6L352.4 76.2L353.8 75.4M353.8 75.4L353.7 77.7L355.2 77.2M355.2 77.2L354.4 78.1L352.7 78.0L351.5 77.8L350.3 77.5L349.6 78.3M349.6 78.3L348.0 78.9L347.4 76.9L346.0 77.8L344.9 78.5L344.1 77.2M344.1 77.2L343.6 75.5L342.7 75.8" fill="none" stroke-width="1"/>
<path d="M313.3 82.4L314.7 82.1L315.5 81.7L316.1 80.8L317.4 80.7L318.0 79.5L319.0 82.3L319.8 79.7L321.6 80.7L321.6 79.7L323.1 80.8L324.3 82.1L324.8 80.4L326.6 82.1L327.4 80.7L328.7 81.3L328.7 82.7L327.1 83.0L326.4 82.4L325.6 81.8L323.9 84.2L323.1 83.4L321.4 83.3L321.3 82.4L319.4 82.1L318.0 83.8L317.5 83.1L317.1 82.6L315.2 82.9L314.6 82.5Z" fill="#276b27"/>
<path d="M313.3 82.4L314.0 82.6L314.6 81.0L316.1 80.8M316.1 80.8L317.3 79.3L318.0 80.6L319.4 81.0L320.5 80.7L320.6 81.9L321.5 80.8L323.1 80.8M323.1 80.8L324.1 80.3L325.9 80.1L326.9 80.4L327.3 81.0L328.7 81.3M328.7 81.3L328.7 82.7M328.7 82.7L327.0 81.5L326.5 84.4L324.9 84.0L324.5 81.9L323.1 83.4M323.1 83.4L322.2 84.5L320.6 84.3L320.1 84.5L318.3 83.1L317.5 83.1M317.5 83.1L315.9 83.3L315.3 82.3L314.5 82.7L313.3 82.4" fill="none" stroke-width="1"/>
<path d="M334.3 84.4L334.9 85.0L336.5 83.9L337.2 85.5L338.9 85.3L339.9 84.4L340.4 84.9L341.3 85.8L341.3 87.3L340.3 88.3L339.2 86.8L337.8 87.2L337.1 87.3L336.2 87.0L335.8 85.5L334.3 85.8Z" fill="#276b27"/>
<path d="M334.3 84.4L335.5 83.5L336.1 84.8L337.8 83.3L338.6 85.2L339.9 84.4M339.9 84.4L339.8 85.9L341.3 85.8M341.3 85.8L341.3 87.3M341.3 87.3L340.0 86.5L339.5 86.7L338.2 86.4L337.1 87.3M337.1 87.3L335.8 86.6L334.6 87.1L334.3 85.8M334.3 85.8L334.3 84.4" fill="none" stroke-width="1"/>
<path d="M343.4 84.1L344.6 84.4L345.1 83.2L346.8 84.0L346.9 84.1L348.2 84.1L349.9 83.8L350.3 84.8L350.1 85.8L349.0 86.5L347.5 86.9L346.5 87.4L345.6 87.0L344.2 87.3L343.4 86.5L342.8 85.1Z" fill="#276b27"/>
<path d="M343.4 84.1L344.6 83.5L344.8 85.6L345.7 85.7L347.5 84.8L348.2 84.1M348.2 84.1L349.4 83.9L350.3 84.8M350.3 84.8L349.7 86.4L348.3 85.5L347.5 86.9M347.5 86.9L346.4 86.2L345.0 86.9L344.1 87.6L343.4 86.5M343.4 86.5L342.6 85.4L343.4 84.1" fill="none" stroke-width="1"/>
<path d="M331.5 80.6L332.0 79.4L334.1 81.3L335.0 81.8L335.9 80.0L337.1 80.4L337.7 81.2L338.8 81.8L339.9 81.1L338.5 81.7L339.9 82.7L338.7 83.0L337.5 81.8L337.0 81.4L335.4 82.1L334.3 82.7L332.8 82.5L332.2 81.7L331.5 81.9Z" fill="#276b27"/>
<path d="M331.5 80.6L333.2 80.7L333.2 78.9L334.8 82.1L335.9 81.4L337.1 80.4M337.1 80.4L338.1 81.6L338.5 80.5L339.9 81.1M339.9 81.1L338.8 81.4L339.9 82.7M339.9 82.7L338.9 82.4L337.8 81.7L336.9 82.9L335.5 83.4L334.3 82.7M334.3 82.7L333.0 82.1L332.0 83.6L331.5 81.9M331.5 81.9L331.5 80.6" fill="none" stroke-width="1"/>
<path d="M305.6 81.1L306.6 81.2L307.1 79.9L309.1 80.8L310.3 80.6L310.5 79.5L311.6 79.9L312.7 78.6L314.1 78.8L314.7 79.7L314.0 81.1L313.0 80.7L312.0 80.3L311.5 81.6L310.2 83.0L309.1 81.6L307.4 82.3L306.6 82.4Z" fill="#276b27"/>
<path d="M305.6 81.1L307.0 80.4L307.8 80.3L308.6 80.8L308.8 79.5L310.5 79.5M310.5 79.5L311.7 81.2L312.4 78.5L314.1 79.7L314.7 79.7M314.7 79.7L314.0 81.1M314.0 81.1L313.4 79.6L312.6 81.6L311.6 81.7L310.1 81.0L309.1 81.6M309.1 81.6L308.2 82.2L306.7 80.9L305.6 81.1" fill="none" stroke-width="1"/>
<path d="M355.2 97.1L356.8 97.3L357.3 95.6L358.3 96.3L359.4 96.2L360.1 96.8L361.1 97.5L362.1 97.8L363.8 97.0L364.3 98.0L363.2 97.3L362.2 98.7L361.3 97.6L359.7 98.3L358.7 98.9L357.3 98.4L356.6 98.4L356.8 97.2Z" fill="#276b27"/>
<path d="M355.2 97.1L356.9 96.5L357.3 95.6M357.3 95.6L358.7 95.9L359.4 96.2M359.4 96.2L360.5 96.9L361.7 97.4L362.2 98.4L363.6 96.9L364.3 98.0M364.3 98.0L363.4 98.2L362.2 98.7M362.2 98.7L360.6 98.0L359.8 97.7L358.7 98.9M358.7 98.9L357.5 99.9L356.6 98.4M356.6 98.4L355.6 98.5L355.2 97.1" fill="none" stroke-width="1"/>
<path d="M337.8 90.8L338.4 89.8L339.9 89.2L341.3 89.9L342.6 89.4L343.4 90.8L343.0 92.3L342.0 91.7L341.0 92.5L339.8 91.8L339.2 91.6L338.6 90.3Z" fill="#276b27"/>
<path d="M337.8 90.8L338.3 89.7L340.3 90.3L341.3 89.9M341.3 89.9L342.5 89.5L343.4 90.8M343.4 90.8L343.0 91.6L342.0 91.7M342.0 91.7L341.4 92.2L339.8 90.8L339.2 91.6M339.2 91.6L338.6 91.7L337.8 90.8" fill="none" stroke-width="1"/>
<path d="M394.0 120.5L394.8 119.2L395.4 118.5L396.2 117.4L396.9 116.3L397.5 115.5L398.1 115.2L399.1 115.3L399.0 116.1L398.6 117.3L399.3 117.8L400.7 118.1L401.4 118.0L401.6 118.9L402.8 119.4L403.3 120.4L403.2 121.1L402.1 121.9L401.3 121.6L400.5 121.2L399.3 121.6L398.7 120.5L397.9 120.7L396.9 120.0L396.2 120.1L395.1 121.3Z" fill="#276b27"/>
<path d="M394.0 120.5L394.9 120.0L395.4 118.5M395.4 118.5L396.1 117.4L397.2 116.4L397.5 115.5M397.5 115.5L398.3 115.5L399.1 115.3M399.1 115.3L398.2 115.9L398.6 117.3M398.6 117.3L399.4 117.0L400.5 118.1L401.4 118.0M401.4 118.0L402.2 118.5L402.8 119.4M402.8 119.4L402.3 120.4L403.2 121.1M403.2 121.1L402.1 121.9M402.1 121.9L401.4 122.1L400.4 121.4L399.3 121.6M399.3 121.6L398.1 121.6L397.9 120.7M397.9 120.7L396.7 120.8L396.1 121.1L395.0 121.3L394.0 120.5" fill="none" stroke-width="1"/>
<path d="M386.7 117.5L388.2 117.4L388.9 117.5L390.2 118.0L390.2 118.6L389.0 119.1L388.0 118.6L387.4 118.0Z" fill="#276b27"/>
<path d="M386.7 117.5L388.2 117.1L388.9 117.9L390.2 118.0M390.2 118.0L390.2 118.6M390.2 118.6L389.4 118.2L388.2 118.4L387.4 118.0M387.4 118.0L386.7 117.5" fill="none" stroke-width="1"/>
<path d="M387.0 121.6L388.2 122.4L389.5 121.7L390.2 122.2L389.5 122.9L388.4 122.2L387.4 122.5Z" fill="#276b27"/>
<path d="M387.0 121.6L388.1 121.6L389.2 121.6L390.2 122.2M390.2 122.2L389.5 122.9M389.5 122.9L388.4 122.8L387.4 122.5M387.4 122.5L387.0 121.6" fill="none" stroke-width="1"/>
<path d="M297.5 116.2L298.4 116.5L299.5 116.5L300.7 116.8L301.5 117.5L302.4 117.6L303.5 118.5L304.3 119.6L303.3 120.1L302.1 119.3L301.7 118.1L300.2 118.1L299.6 117.0L298.6 117.3Z" fill="#276b27"/>
<path d="M297.5 116.2L298.7 117.1L299.8 116.2L300.7 116.8M300.7 116.8L301.1 118.0L302.6 118.4L303.5 118.5M303.5 118.5L304.3 119.6M304.3 119.6L303.0 119.3L302.1 119.3M302.1 119.3L301.2 118.8L301.0 117.6L299.8 118.0L298.6 117.3M298.6 117.3L297.5 116.2" fill="none" stroke-width="1"/>
<path d="M290.9 111.7L291.7 111.5L292.7 111.8L293.7 112.8L293.7 114.2L293.0 113.9L292.0 113.5L292.0 112.6Z" fill="#276b27"/>
<path d="M290.9 111.7L291.7 112.2L292.7 111.8M292.7 111.8L293.9 112.8L293.7 114.2M293.7 114.2L293.3 113.3L292.0 113.5M292.0 113.5L290.8 113.3L290.9 111.7" fill="none" stroke-width="1"/>
<path d="M260.8 106.4L261.5 106.2L262.9 106.0L263.9 106.0L263.6 107.2L262.2 107.8L261.1 107.9Z" fill="#1c541a"/>
<path d="M260.8 106.4L261.6 105.9L262.8 105.6L263.9 106.0M263.9 106.0L263.6 107.2M263.6 107.2L262.6 107.3L261.1 107.9M261.1 107.9L260.8 106.4" fill="none" stroke-width="1"/>
<path d="M258.7 158.6L260.1 159.3L259.3 160.4L258.7 159.5Z" fill="#1c541a"/>
<path d="M257.8 157.6L258.7 157.8L258.2 158.1Z" fill="#1c541a"/>
<path d="M255.7 156.7L256.4 157.0L255.8 157.1Z" fill="#1c541a"/>
<path d="M253.6 155.9L254.1 156.0L253.9 156.3Z" fill="#1c541a"/>
<path d="M382.9 161.0L385.0 161.1L384.9 161.7L382.9 161.7Z" fill="#1c541a"/>
<path d="M374.8 78.3L376.5 79.1L376.7 77.4L377.2 76.4L378.7 77.6L379.8 77.0L380.4 76.4L381.8 76.9L382.2 76.7L383.1 75.9L384.8 76.6L385.3 75.9L386.0 74.4L387.3 74.1L388.1 73.3L389.3 73.2L390.6 74.2L391.3 73.1L392.7 73.9L393.0 73.0L394.0 72.7L394.8 72.6L396.4 72.6L397.5 73.3L398.6 73.5L399.4 73.0L400.5 73.0L401.5 72.6L402.6 73.1L404.0 72.5L404.6 72.1L406.2 73.0L407.0 72.5L407.8 71.6L408.7 72.0L409.9 72.2L410.8 71.4L412.1 72.0L412.9 72.2L414.2 72.4L415.4 72.3L415.9 71.9L417.0 72.0L418.2 71.4L419.1 70.5L420.0 71.3L421.2 71.3L422.3 70.5L423.6 71.0L424.9 70.7L425.5 70.5L426.6 71.3L428.2 71.5L428.8 71.0L430.0 71.0L431.1 71.6L432.2 70.8L433.5 70.2L434.2 71.0L435.1 71.4L436.2 70.9L437.6 71.4L438.5 71.8L439.4 71.9L440.7 71.7L441.9 71.6L442.8 72.1L443.9 72.0L444.8 72.7L446.1 71.8L446.8 72.7L448.0 73.1L448.9 73.0L450.1 73.4L450.7 73.1L452.1 73.8L453.3 73.0L454.1 72.9L454.8 73.7L456.3 73.5L457.1 73.0L458.4 73.3L458.8 73.9L460.1 73.6L459.1 74.0L458.1 74.9L457.1 74.7L456.2 75.0L455.0 74.5L453.7 75.0L453.1 75.8L452.3 76.5L451.0 76.8L450.3 77.9L450.5 79.0L450.2 79.9L451.0 80.6L450.0 81.5L449.0 81.4L448.6 82.2L447.5 82.0L447.7 83.2L449.3 83.0L449.6 83.8L448.7 84.7L448.1 84.5L446.6 84.6L446.1 85.5L445.0 86.0L444.4 86.2L443.3 86.5L444.1 86.5L445.5 87.1L446.1 87.8L446.1 89.2L445.2 89.6L444.3 89.6L443.4 89.6L442.0 90.6L441.2 90.1L440.5 91.2L439.8 91.6L439.0 91.4L437.4 91.4L437.0 92.3L435.4 92.4L434.8 91.9L433.5 92.4L432.5 92.3L431.4 93.8L430.4 94.5L429.4 94.5L428.2 94.3L427.0 94.8L426.3 94.6L425.2 95.5L424.4 95.5L423.1 96.0L421.9 96.2L421.0 96.6L420.3 97.5L419.6 98.7L418.5 99.6L417.7 99.9L417.2 101.4L416.4 102.7L416.1 103.5L415.2 103.6L414.0 103.2L413.1 103.5L411.5 103.3L411.0 101.9L409.8 102.3L409.3 101.7L408.6 100.1L407.7 100.0L407.1 98.9L406.7 98.3L405.6 98.0L405.1 97.5L404.6 96.4L403.8 95.2L402.8 95.2L402.2 94.3L401.7 93.1L402.3 92.7L403.5 91.7L404.2 91.0L403.6 90.1L402.3 89.9L401.4 90.2L400.3 89.5L400.7 88.5L402.2 88.9L403.3 87.7L404.2 88.0L402.8 88.2L402.0 87.9L401.1 87.0L400.0 86.9L398.7 86.4L398.1 85.0L397.9 84.1L396.9 83.9L396.0 82.6L395.1 82.0L394.6 81.2L393.4 80.7L391.5 81.6L391.2 79.9L389.4 82.6L388.8 81.1L388.1 81.7L386.2 80.7L386.2 82.0L384.5 81.1L383.3 80.1L383.3 81.8L381.8 81.3L380.6 82.5L378.8 81.8L378.8 81.2L377.6 80.0L375.7 80.2L376.6 78.5Z" fill="#dcefd9"/>
<path d="M374.8 78.3L376.1 78.4L377.3 78.6L378.3 78.9L379.1 77.3L379.4 77.7L381.4 77.0L381.8 76.9M381.8 76.9L382.6 77.4L382.4 74.8L383.7 74.1L385.5 75.7L386.0 74.4M386.0 74.4L387.0 73.7L388.3 73.2L389.6 75.2L390.1 72.1L391.2 72.8L392.3 71.9L393.0 73.0M393.0 73.0L394.0 72.5L394.9 73.0L396.0 73.0L397.1 72.1L398.1 72.3L399.7 73.6L400.4 73.3L401.8 72.0L402.7 72.4L404.0 73.3L405.1 72.5L406.1 71.9L407.0 72.5M407.0 72.5L408.1 72.0L409.3 72.3L410.0 72.5L411.0 71.3L412.1 72.3L413.3 72.2L414.0 71.8L415.3 71.3L416.2 71.5L417.4 72.2L418.2 71.4M418.2 71.4L419.3 70.5L420.1 72.0L421.5 70.5L422.7 71.5L423.4 71.3L424.6 70.8L425.8 71.3L426.8 70.6L427.8 71.8L428.9 71.6L430.0 70.7L430.8 71.2L432.2 70.8M432.2 70.8L433.4 70.6L434.1 70.9L435.1 71.2L436.6 70.8L437.7 72.2L438.5 70.8L439.6 70.8L441.0 71.9L441.9 71.6M441.9 71.6L442.7 72.1L444.2 71.9L444.8 71.6L445.8 72.8L447.0 71.9L448.2 72.0L448.9 73.0M448.9 73.0L450.3 72.7L450.8 73.2L452.1 72.6L453.3 74.1L454.1 73.7L455.0 73.3L456.2 74.0L457.0 72.7L457.8 74.0L459.0 73.5L460.1 73.6M460.1 73.6L459.2 73.5L458.5 74.8L457.2 74.6L456.2 74.9L454.9 74.8L453.9 75.5L453.1 75.8M453.1 75.8L452.9 77.0L451.3 77.6L450.3 77.9M450.3 77.9L451.0 78.7L450.6 80.0L451.0 80.6M451.0 80.6L449.8 80.3L449.4 82.0L449.0 82.3L447.5 82.0M447.5 82.0L447.9 82.8L448.8 82.9L449.6 83.8M449.6 83.8L449.0 84.9L447.8 83.9L447.0 85.2L446.1 85.5M446.1 85.5L445.4 85.9L443.7 85.4L443.3 86.5M443.3 86.5L444.0 86.7L445.3 87.7L446.1 87.8M446.1 87.8L446.1 89.2M446.1 89.2L445.4 89.1L444.6 90.3L443.2 90.2L442.6 90.4L441.2 90.1M441.2 90.1L441.1 90.9L439.8 91.6M439.8 91.6L438.6 92.4L437.5 91.1L436.5 91.9L435.8 92.6L434.5 92.7L433.5 92.4M433.5 92.4L432.5 92.9L431.9 93.9L430.0 93.3L429.4 94.5M429.4 94.5L428.6 95.5L427.3 94.9L426.1 94.5L425.2 95.5M425.2 95.5L424.4 96.5L423.1 95.5L421.9 96.8L421.0 96.6M421.0 96.6L420.4 97.5L419.6 98.7M419.6 98.7L418.9 99.3L418.2 101.0L417.2 101.4M417.2 101.4L416.3 101.9L416.1 103.5M416.1 103.5L414.9 103.1L414.0 103.2M414.0 103.2L413.0 102.9L412.2 102.8L411.1 101.9L409.8 102.3M409.8 102.3L409.0 101.1L407.9 100.8L407.7 100.0M407.7 100.0L407.2 98.8L406.4 98.7L405.6 98.0M405.6 98.0L405.1 96.8L404.5 95.9L403.4 95.8L402.8 95.2M402.8 95.2L402.3 94.2L401.7 93.1M401.7 93.1L402.2 92.1L403.5 92.0L404.2 91.0M404.2 91.0L403.0 90.8L402.2 90.7L401.4 90.2M401.4 90.2L400.7 89.8L400.7 88.5M400.7 88.5L402.2 88.3L403.2 87.7L404.2 88.0M404.2 88.0L403.1 88.0L402.0 87.9L401.0 87.4L400.0 86.9M400.0 86.9L398.8 86.3L398.3 85.0L397.9 84.1M397.9 84.1L396.7 84.0L395.9 82.6L395.1 82.0M395.1 82.0L393.9 81.8L392.5 82.5L392.0 80.0L390.8 81.4L390.2 80.2L388.8 81.1M388.8 81.1L388.2 79.9L386.8 79.7L386.4 82.3L385.2 80.4L384.3 80.6L382.9 82.8L381.8 81.3M381.8 81.3L381.2 81.5L380.3 80.5L378.2 80.8L377.6 80.0M377.6 80.0L376.2 79.5L376.1 78.6L374.8 78.3" fill="none" stroke-width="1"/>
<path d="M442.9 95.7L443.6 95.7L444.8 94.8L445.4 94.6L446.4 95.0L447.5 95.3L448.2 95.2L449.7 95.5L450.7 95.2L451.7 94.9L452.9 95.5L453.4 94.6L454.5 94.5L455.3 94.8L456.3 95.5L457.4 96.1L457.9 96.6L457.3 97.5L455.9 97.5L454.9 97.2L453.8 98.8L452.4 98.4L451.1 97.7L450.4 98.6L448.9 98.7L447.5 98.4L446.4 98.1L445.4 98.1L446.1 97.3L445.5 97.3L444.5 96.6L443.3 96.7L444.2 96.3L445.7 96.9L446.1 96.0L445.1 96.5L444.1 95.6Z" fill="#c4e3c2"/>
<path d="M442.9 95.7L443.3 94.7L444.9 95.5L445.4 94.6M445.4 94.6L446.8 94.3L447.6 94.8L448.2 95.2M448.2 95.2L449.4 95.2L450.5 94.2L451.7 94.9M451.7 94.9L452.8 95.1L453.4 94.0L454.5 94.5M454.5 94.5L455.5 95.5L456.3 95.5M456.3 95.5L457.2 95.5L457.9 96.6M457.9 96.6L456.7 97.4L455.9 97.5M455.9 97.5L454.4 97.8L453.4 98.4L452.4 98.4M452.4 98.4L451.5 98.1L450.0 98.5L448.9 98.7M448.9 98.7L448.0 98.6L446.7 98.2L445.4 98.1M445.4 98.1L446.1 97.3M446.1 97.3L445.1 97.7L444.1 97.6L443.3 96.7M443.3 96.7L444.1 96.8L445.3 95.5L446.1 96.0M446.1 96.0L445.4 95.5L444.2 96.1L442.9 95.7" fill="none" stroke-width="1"/>
<path d="M358.2 156.3L359.6 155.8L360.8 154.7L362.9 154.6L364.4 154.7L365.7 155.4L367.1 155.8L368.5 156.4L369.8 157.3L371.3 157.8L373.1 158.6L372.0 159.0L370.2 158.7L368.5 159.0L368.9 158.1L367.1 157.0L365.8 156.7L364.3 156.1L362.2 155.7L360.1 156.0Z" fill="#c4e3c2"/>
<path d="M367.4 161.1L369.2 161.0L370.3 161.7L368.9 161.9L367.4 161.5Z" fill="#f4f8f0"/>
<path d="M372.9 160.8L374.8 161.3L376.5 161.5L376.6 159.3L374.8 159.0L374.3 159.5L375.4 160.1L375.5 160.7L374.3 160.8Z" fill="#f4f8f0"/>
<path d="M376.5 161.5L376.6 159.3L377.8 159.6L379.0 159.2L380.1 160.0L381.1 160.6L381.1 161.4L379.0 161.3L377.6 162.1Z" fill="#f4f8f0"/>
<path d="M366.7 149.6L368.1 149.5L368.5 150.2L367.0 150.0Z" fill="#f4f8f0"/>
<path d="M367.4 151.8L368.1 151.8L368.4 153.1L367.5 152.9Z" fill="#f4f8f0"/>
<path d="M368.9 149.9L369.2 150.2L369.1 150.7L368.7 150.5Z" fill="#f4f8f0"/>
<path d="M390.3 171.8L391.6 171.6L391.6 172.6L390.3 172.6Z" fill="#f4f8f0"/>
<path d="M381.0 259.6L382.2 260.1L383.2 260.7L383.9 261.4L384.7 261.8L385.7 262.4L384.4 262.5L383.9 262.9L383.0 262.9L381.6 263.0L381.0 262.6L381.5 261.2L380.3 260.2Z" fill="#9dd09b"/>
<path d="M381.0 259.6L382.0 260.2L383.1 259.8L383.9 261.4M383.9 261.4L384.5 262.3L385.7 262.4M385.7 262.4L385.0 262.8L383.9 262.9M383.9 262.9L382.9 262.1L382.3 262.6L381.0 262.6M381.0 262.6L382.0 261.5L381.4 260.7L381.0 259.6" fill="none" stroke-width="1"/>
<path d="M381.0 259.6L380.5 260.6L380.2 261.2L381.0 262.6L380.1 262.8L379.0 263.5L378.0 262.7L377.0 263.3L376.2 262.1L374.8 261.8L374.1 261.8L373.4 260.7L374.6 259.9L375.5 260.7L376.0 261.7L377.3 260.7L378.3 261.0L379.0 259.7L380.0 260.2Z" fill="#9dd09b"/>
<path d="M381.0 259.6L381.4 260.9L380.7 261.4L381.0 262.6M381.0 262.6L380.6 264.0L379.0 263.5M379.0 263.5L378.2 262.3L377.4 262.5L376.2 262.1M376.2 262.1L375.8 261.4L374.5 260.5L373.4 260.7M373.4 260.7L374.5 260.9L375.5 260.7M375.5 260.7L376.8 259.7L377.4 261.9L378.3 261.0M378.3 261.0L379.0 259.7M379.0 259.7L379.9 260.4L381.0 259.6" fill="none" stroke-width="1"/>
<path d="M348.9 187.0L349.8 186.9L349.9 188.0L349.1 188.0Z" fill="#c4e3c2"/>
<path d="M390.5 163.9L391.3 164.0L390.9 164.6Z" fill="#f4f8f0"/>
<path d="M391.2 166.0L391.9 166.1L391.6 166.7Z" fill="#f4f8f0"/>
<path d="M391.3 168.0L391.7 168.2L391.5 168.6Z" fill="#f4f8f0"/>
<path d="M390.9 165.0L391.3 165.1L391.0 165.5Z" fill="#f4f8f0"/>
<path d="M393.4 168.2L393.8 168.3L393.6 168.6Z" fill="#f4f8f0"/>
<path d="M388.9 162.5L389.5 162.6L389.2 162.9Z" fill="#f4f8f0"/>
<path d="M369.9 152.7L371.2 153.2L371.6 154.1L370.9 153.9Z" fill="#f4f8f0"/>
<path d="M373.1 155.2L374.8 155.6L374.7 157.5L373.8 157.2Z" fill="#f4f8f0"/>
<path d="M242.7 112.4L243.5 111.7L244.3 111.8L244.1 112.5Z" fill="#1c541a"/>
<path d="M242.7 112.4L243.2 111.5L244.3 111.8M244.3 111.8L244.1 112.5M244.1 112.5L242.7 112.4" fill="none" stroke-width="1"/>
<path d="M240.3 113.3L241.7 113.3L242.0 112.5L241.7 113.2Z" fill="#1c541a"/>
<path d="M240.3 113.3L240.9 112.3L242.0 112.5M242.0 112.5L241.7 113.2M241.7 113.2L240.3 113.3" fill="none" stroke-width="1"/>
<path d="M232.9 114.3L235.0 114.0L234.3 114.6Z" fill="#1c541a"/>
<path d="M228.3 114.9L230.1 114.6L229.4 115.1Z" fill="#1c541a"/>
<path d="M242.9 103.4L244.0 104.1L245.0 103.1L244.8 103.8L243.5 103.8Z" fill="#1c541a"/>
<path d="M242.9 103.4L243.8 103.4L245.0 103.1M245.0 103.1L244.8 103.8M244.8 103.8L244.1 103.3L242.9 103.4" fill="none" stroke-width="1"/>
<path d="M236.8 98.7L237.5 99.1L238.7 98.9L239.5 99.4L240.6 98.9L239.2 99.3L237.9 98.7Z" fill="#1c541a"/>
<path d="M373.1 244.6L374.1 244.8L374.2 245.6L373.8 246.7L372.9 246.4L372.8 245.2Z" fill="#9dd09b"/>
<path d="M373.1 244.6L374.1 244.8M374.1 244.8L373.1 245.9L373.8 246.7M373.8 246.7L372.9 246.4M372.9 246.4L374.1 245.5L373.1 244.6" fill="none" stroke-width="1"/>
<path d="M405.9 186.9L407.7 186.7L409.2 187.6L407.7 188.8L406.1 188.4Z" fill="#5aab5c"/>
<defs><path id="p56" d="M513.0 88.1L514.2 88.2L515.4 88.1L516.1 88.3L517.2 89.4L518.4 89.1L518.9 89.8L520.3 89.2L519.9 89.6L518.9 90.1L519.6 90.5L521.3 90.2L522.1 89.4L523.0 90.5L524.2 90.5L525.0 90.3L526.1 90.4L527.2 90.9L528.0 91.5L529.2 91.7L530.0 92.1L531.0 92.6L531.8 93.0L533.1 93.2L534.2 93.1L533.7 94.1L534.2 94.8L532.9 95.0L531.7 95.4L530.7 95.2L529.6 94.8L529.1 94.3L527.6 95.0L526.9 94.6L525.8 94.4L524.8 94.9L523.9 93.9L523.0 94.2L524.1 94.6L524.4 95.2L525.1 95.9L525.8 97.5L527.4 98.1L529.3 98.1L530.0 96.9L531.5 96.8L532.8 97.0L533.5 95.5L534.3 95.5L535.4 95.0L536.3 94.6L537.4 94.7L538.4 94.9L538.0 93.7L538.4 92.7L537.7 91.6L538.9 91.9L539.8 92.5L541.2 92.4L541.1 93.1L541.2 94.1L542.3 94.2L543.2 93.2L544.0 93.0L545.0 92.9L546.0 92.6L547.1 92.6L548.0 91.8L549.0 91.3L550.1 91.8L551.0 91.3L552.1 91.4L552.4 92.1L553.6 92.5L554.6 92.1L555.6 91.3L557.1 91.5L558.0 91.2L559.4 91.2L560.5 91.8L561.5 91.6L562.0 90.7L561.5 89.9L562.5 90.4L563.3 90.0L564.4 89.9L565.4 91.0L566.4 90.6L567.3 91.1L568.7 91.8L569.9 91.7L570.8 91.8L571.7 92.6L572.7 92.1L571.5 91.8L571.5 90.7L570.6 90.3L570.3 89.1L570.6 88.3L571.6 87.9L571.9 86.9L572.7 85.8L573.8 86.2L574.8 85.7L575.7 85.8L576.4 85.8L577.6 85.5L578.2 86.3L578.6 87.6L578.3 88.7L577.7 89.9L577.6 91.0L578.5 91.9L579.7 92.4L578.7 92.8L578.7 94.3L577.6 94.8L578.4 94.0L579.5 93.7L580.4 93.4L580.2 92.1L581.1 91.0L580.3 90.6L580.5 89.1L580.3 88.5L579.7 87.6L580.6 87.0L580.7 86.0L581.8 85.9L582.8 85.7L584.0 86.4L585.0 86.0L586.0 86.5L586.5 85.6L587.7 85.7L589.0 85.5L589.5 84.8L589.8 85.9L590.7 86.5L591.6 87.3L592.0 87.9L592.8 88.8L593.7 89.0L593.8 88.0L593.7 87.0L594.4 86.2L593.6 85.8L592.0 85.9L591.1 85.5L590.2 84.7L591.4 85.2L592.2 84.7L593.4 84.7L594.3 83.9L595.4 84.5L596.1 83.7L597.2 84.2L597.9 83.3L598.6 82.7L599.7 82.6L600.6 82.7L602.0 82.5L603.0 82.2L604.1 81.9L605.1 81.6L606.3 81.2L607.4 80.9L608.3 81.3L609.4 80.9L610.2 80.8L611.1 80.5L612.5 80.7L613.3 80.7L614.3 80.6L615.3 80.8L616.2 80.5L617.4 79.6L618.8 80.3L619.6 80.5L620.3 79.4L621.7 80.0L622.8 79.0L623.5 79.7L624.3 80.0L625.3 80.8L626.5 80.6L627.7 81.2L628.8 80.2L629.7 81.3L630.6 80.5L631.5 81.1L633.0 81.2L634.1 80.4L634.9 81.1L634.1 81.7L633.8 82.7L633.5 83.4L632.7 83.9L631.6 83.6L630.5 84.6L629.3 84.4L630.4 84.7L631.4 84.0L632.3 85.0L633.5 85.2L634.5 85.1L635.6 84.8L636.5 84.9L637.6 84.8L639.0 84.8L639.9 84.6L641.1 84.5L641.9 84.8L642.8 85.0L643.8 85.3L644.7 85.4L645.8 85.1L646.8 85.2L648.0 85.1L648.9 85.5L650.1 85.3L651.2 85.4L652.3 84.9L653.5 84.6L654.5 84.8L655.6 84.9L656.0 85.7L657.4 85.4L658.0 86.2L657.2 86.8L656.6 87.6L657.7 87.6L658.5 87.7L659.7 86.9L660.4 87.3L661.5 87.2L662.7 87.0L663.5 87.1L664.8 87.6L665.7 87.4L666.8 86.7L668.2 87.3L668.8 86.8L670.2 86.9L671.3 86.5L672.2 85.6L673.5 86.4L674.1 85.8L675.1 85.5L675.9 85.7L677.0 86.0L677.9 85.9L678.9 86.2L680.3 86.3L681.1 86.5L682.4 86.3L683.5 86.6L684.5 87.7L685.6 87.7L686.7 87.6L687.6 87.5L688.6 88.1L689.5 88.4L690.4 88.3L691.4 88.8L692.5 89.0L693.8 88.8L694.8 88.0L695.6 88.1L696.9 87.8L697.8 88.4L698.6 89.4L699.7 89.6L700.6 89.7L701.3 90.2L702.2 89.9L703.2 89.9L704.2 90.4L705.4 90.3L706.2 90.1L707.4 89.7L708.3 90.1L709.7 90.5L710.7 89.8L711.8 90.1L712.8 90.1L714.2 89.3L715.3 89.6L716.0 91.0L717.0 90.9L718.1 90.2L719.1 90.0L719.9 90.8L721.2 90.1L721.9 90.6L723.0 89.9L724.1 89.9L725.1 90.5L726.6 90.3L727.5 90.4L728.6 91.2L728.6 96.6L727.5 97.1L726.3 96.9L725.1 97.1L726.0 98.2L726.5 99.1L727.3 99.5L727.9 100.2L726.9 99.9L725.7 100.2L724.4 100.0L723.2 100.5L722.3 100.3L721.2 101.0L720.2 101.0L719.4 101.6L718.3 102.0L717.5 102.9L716.4 103.4L715.3 103.5L714.1 103.0L713.2 103.8L712.1 103.8L710.9 103.2L710.1 103.5L709.0 103.8L708.0 104.0L706.7 103.9L705.5 103.8L705.5 104.6L705.3 105.6L704.3 106.0L703.4 106.5L704.3 107.4L704.8 108.8L704.4 109.7L703.4 110.7L702.6 111.7L701.2 111.9L700.6 112.9L699.9 113.6L699.0 113.9L698.3 114.9L697.1 115.6L696.0 116.0L695.6 114.9L695.4 114.1L694.6 113.2L694.7 112.2L694.9 110.7L694.5 109.7L694.9 109.1L695.1 108.0L696.0 107.4L696.9 106.4L698.1 106.0L698.8 105.2L699.5 104.4L700.6 103.9L701.7 103.7L702.4 103.6L703.2 102.8L704.0 102.1L704.7 101.7L705.3 101.0L706.2 100.2L705.1 100.0L704.4 100.3L703.2 100.8L702.6 101.3L701.3 101.1L700.4 101.7L699.5 101.7L698.6 101.8L697.6 101.1L696.4 101.3L695.4 101.9L694.9 102.8L694.8 103.6L693.7 104.2L692.4 104.8L690.8 104.4L689.5 104.9L688.1 104.2L686.6 104.4L685.3 104.6L683.9 104.3L682.3 104.1L680.4 104.5L679.0 104.8L677.7 104.4L676.2 104.6L675.0 105.3L674.1 106.2L672.7 106.7L671.2 107.3L669.9 108.3L668.8 109.2L667.2 109.7L666.1 110.7L667.6 111.3L669.2 111.8L669.9 112.1L671.5 111.7L673.4 111.8L674.5 112.9L674.1 114.6L673.4 116.7L673.2 118.7L672.0 119.8L671.3 121.1L670.3 122.6L669.3 122.9L668.5 123.3L667.8 124.6L666.6 124.9L666.1 126.1L665.0 126.7L663.8 126.9L662.9 127.3L662.1 127.2L661.2 126.8L660.7 127.9L659.7 128.0L659.2 129.1L658.3 129.3L658.3 130.1L657.1 130.2L656.3 131.2L655.2 132.2L656.5 133.1L657.0 134.4L657.9 135.4L658.1 136.3L657.9 137.4L657.3 138.0L656.3 138.2L655.6 138.5L653.7 139.0L653.8 137.4L653.9 135.6L654.1 134.4L653.2 134.4L651.7 134.2L651.7 133.1L652.1 131.9L650.9 131.3L648.9 131.8L647.6 132.1L646.5 132.9L647.1 130.8L647.8 130.4L646.1 130.0L645.2 130.9L644.1 131.3L643.1 131.7L641.9 132.3L641.5 133.1L643.2 134.5L643.6 135.2L644.5 134.6L645.7 134.2L646.9 134.6L648.2 134.8L648.1 135.5L647.1 136.2L645.7 136.5L644.6 136.8L643.7 137.8L643.6 138.4L645.1 139.8L646.0 141.4L647.4 142.7L647.2 143.8L646.4 144.5L647.5 145.2L646.9 146.9L645.7 148.0L645.2 149.1L644.4 149.9L644.0 151.3L643.1 152.1L642.1 152.7L640.9 153.3L640.1 154.3L638.2 154.6L636.7 155.4L635.6 155.9L634.6 156.2L633.2 156.7L631.4 157.2L631.1 158.5L630.4 157.0L628.6 156.5L627.9 156.8L626.2 157.8L625.5 158.8L624.9 160.0L625.8 161.9L626.3 163.1L627.2 163.7L628.3 164.4L629.2 166.0L629.6 167.5L629.6 168.9L629.7 170.0L629.0 171.2L627.9 171.8L626.5 172.2L626.1 173.3L624.2 174.4L623.5 174.7L623.7 172.8L623.0 172.2L621.8 172.1L620.9 170.7L620.8 170.4L619.5 169.3L618.1 169.0L618.0 168.0L617.4 167.9L616.7 168.2L616.7 170.0L616.2 170.9L615.8 172.1L615.6 173.7L616.7 174.8L617.4 176.6L618.8 177.2L619.7 178.0L620.7 178.5L621.2 179.3L621.3 180.0L621.6 181.1L621.5 181.8L621.5 182.7L622.0 183.8L622.6 184.7L621.6 184.8L620.4 184.5L620.0 183.6L619.6 183.0L618.6 182.6L618.2 181.6L617.6 180.8L616.9 179.8L617.2 179.0L616.9 177.7L616.3 177.0L615.7 176.0L614.9 175.1L614.4 175.5L614.4 173.4L614.8 172.5L614.4 171.3L614.6 170.0L614.4 168.7L614.2 167.2L613.5 165.1L613.4 163.7L612.3 163.1L611.4 164.0L610.2 164.7L608.8 164.4L609.0 162.4L608.8 160.6L607.8 159.3L606.7 158.3L606.0 157.8L605.3 155.7L603.6 155.3L602.8 156.1L601.4 156.4L600.0 156.5L598.6 157.1L598.4 157.9L597.6 159.0L595.8 159.9L594.4 161.4L593.1 162.5L592.0 163.5L590.6 164.4L589.2 165.1L588.8 167.2L589.2 168.5L588.6 169.3L588.5 170.7L588.6 172.3L587.7 173.7L586.3 174.4L585.3 175.4L583.9 174.1L583.5 172.8L582.7 171.6L582.5 170.3L581.5 168.6L580.8 166.5L580.1 165.1L579.4 163.1L578.9 161.8L578.7 160.3L578.8 158.8L578.7 157.5L578.3 155.9L577.6 157.5L575.9 157.9L574.8 156.6L573.4 155.9L575.2 154.9L573.1 154.5L572.3 153.8L571.2 153.4L570.6 152.3L569.9 151.4L568.5 151.8L567.1 151.7L565.7 151.6L564.4 151.8L563.0 151.7L561.3 151.4L559.4 151.4L558.2 151.3L557.0 151.1L556.3 149.1L554.8 149.6L553.1 149.8L551.5 149.4L550.3 148.5L549.3 147.4L548.2 146.7L547.5 145.1L545.4 144.6L544.9 145.1L544.0 145.1L544.0 145.7L544.6 147.1L545.4 148.5L546.8 149.8L547.1 151.1L547.9 152.3L547.9 151.3L548.5 150.5L549.1 152.0L548.8 152.5L550.3 153.1L551.6 153.2L553.1 152.9L554.2 151.6L555.4 150.5L555.8 152.1L556.6 153.5L557.6 153.9L558.8 153.9L559.5 154.8L560.5 155.4L559.9 156.7L559.1 158.2L558.4 159.2L557.7 160.3L556.6 160.4L555.3 161.3L554.2 162.4L552.4 163.1L551.2 163.6L549.9 165.0L548.7 165.3L547.4 166.1L546.1 166.2L545.3 167.0L544.0 167.2L542.6 167.5L541.2 168.2L539.8 168.9L537.7 169.0L537.3 168.2L536.8 166.1L536.8 163.9L536.1 162.4L535.2 161.1L534.2 160.3L533.2 159.4L532.6 157.9L531.7 156.8L531.2 155.4L530.7 154.1L530.0 152.8L528.9 152.0L527.9 150.6L527.4 149.3L526.5 148.5L525.6 147.8L525.8 145.7L525.0 144.6L524.7 143.2L525.1 142.1L525.7 141.2L526.5 139.6L526.6 138.5L527.1 137.4L527.5 135.9L526.5 135.9L524.4 136.5L522.3 136.6L520.8 136.4L519.7 135.6L518.2 136.5L517.0 135.9L516.1 135.8L515.1 134.7L514.5 134.0L513.7 133.6L514.4 132.2L513.5 131.9L513.5 131.2L514.4 131.4L515.4 130.6L516.6 130.3L517.5 130.6L517.9 130.1L516.8 129.8L515.8 129.5L514.7 130.2L513.5 130.8L513.3 130.2L511.9 130.0L510.5 130.2L510.2 131.2L508.9 130.6L508.6 132.2L509.8 133.3L510.5 134.0L509.8 134.5L509.6 135.3L509.2 136.0L508.2 136.0L507.2 135.5L506.5 134.2L507.0 133.6L506.0 132.9L505.1 131.8L504.9 130.7L504.0 130.5L504.0 129.6L504.0 128.7L502.8 127.9L501.7 127.3L500.7 127.0L499.4 126.7L498.6 125.9L497.7 124.3L496.2 124.4L495.9 123.4L494.1 123.9L494.2 125.2L495.9 126.2L496.5 127.2L497.2 128.2L499.3 128.6L500.7 129.8L501.7 130.6L502.8 131.1L500.7 130.5L500.1 131.6L500.8 132.6L500.0 133.4L498.9 134.1L499.3 132.9L498.6 131.2L497.0 130.2L495.1 129.4L494.0 128.7L492.3 127.7L491.3 126.4L490.6 125.5L489.2 125.1L487.4 125.9L485.6 126.9L483.9 126.5L482.5 126.4L481.2 127.0L481.4 127.9L481.4 128.6L480.0 129.3L478.0 130.1L477.6 131.1L476.5 131.9L477.2 132.9L476.1 134.0L475.8 134.5L474.1 135.6L472.4 135.7L470.7 135.8L469.3 136.6L468.1 135.9L466.6 135.1L464.5 135.4L464.6 133.3L463.6 132.9L464.5 130.9L464.6 128.7L463.9 127.0L465.7 126.1L467.5 126.5L469.2 126.2L470.7 126.2L472.0 126.4L473.2 126.3L474.4 126.5L475.1 125.0L475.4 123.6L475.2 122.6L473.8 121.2L472.2 120.6L470.7 120.4L470.2 119.6L472.0 119.0L473.4 119.1L474.7 119.3L474.4 117.8L475.4 118.2L477.2 118.0L479.0 117.1L479.1 116.1L480.4 115.8L481.7 115.4L482.5 114.6L483.5 113.2L484.6 112.8L486.7 112.6L488.2 112.4L488.9 111.9L489.3 111.5L488.9 110.6L488.2 109.6L488.4 107.9L490.2 107.4L491.7 106.7L491.3 108.1L492.1 108.5L491.2 109.2L490.6 110.1L490.7 110.7L492.3 111.3L492.3 111.8L494.4 111.3L496.2 111.5L496.8 111.9L497.9 111.8L499.3 111.4L501.0 111.4L502.5 110.7L503.2 111.4L504.3 111.3L504.9 110.6L506.3 110.0L506.4 109.0L506.3 107.9L507.0 107.0L508.5 106.7L509.3 107.7L510.5 107.7L511.0 106.4L511.2 105.7L509.8 105.3L509.8 104.6L510.4 104.2L511.4 104.2L512.8 105.1L513.8 104.7L514.9 105.0L516.1 104.2L516.8 103.8L517.6 103.3L519.1 103.6L518.5 103.7L517.5 103.2L516.8 102.7L515.8 102.8L514.6 102.1L513.7 104.0L513.3 103.8L511.9 103.2L511.2 103.4L510.2 102.5L509.1 103.6L507.9 102.8L506.7 102.1L505.9 100.8L507.0 100.0L506.7 99.1L507.8 98.7L508.4 98.2L509.2 97.3L510.0 97.0L511.2 96.9L512.4 96.4L512.0 95.7L510.7 95.5L509.5 95.7L508.8 95.3L508.1 95.6L507.8 96.5L506.7 97.3L505.6 98.4L504.5 97.9L503.6 99.2L502.8 99.6L501.9 100.1L501.1 100.7L501.5 101.7L501.0 102.5L502.1 103.2L503.1 103.4L502.2 104.5L501.7 105.5L500.4 105.6L500.8 106.4L499.8 107.7L499.3 108.8L498.2 109.4L496.9 109.7L494.9 109.9L494.4 108.6L493.7 106.7L493.2 105.7L492.6 104.9L491.9 103.6L491.1 104.5L490.2 104.9L488.9 105.3L488.1 106.1L487.1 106.3L486.1 106.1L485.0 105.4L484.6 104.9L483.8 103.7L483.9 102.9L483.7 101.7L483.9 100.9L485.6 100.8L486.0 99.9L486.6 99.5L487.7 99.0L488.8 98.7L490.0 98.3L490.2 98.7L491.4 98.7L490.9 98.0L492.3 97.5L493.0 96.6L494.1 95.8L494.7 94.9L495.3 93.9L496.5 93.4L497.9 92.9L498.6 92.1L499.6 92.2L500.5 91.3L501.4 91.5L503.0 91.4L503.5 90.1L505.0 90.5L505.6 90.3L507.0 89.4L507.7 88.9L508.8 88.4L509.8 88.5L510.9 88.7L512.1 88.5ZM517.6 129.5L517.1 129.1L516.1 128.7L516.1 127.3L515.8 126.6L516.9 125.9L517.0 124.7L518.3 124.0L519.1 122.9L520.0 122.1L521.4 122.1L522.3 122.8L523.7 122.9L522.3 123.7L523.7 125.0L524.9 125.0L526.3 124.3L527.9 123.9L525.8 123.3L525.8 122.5L527.2 122.1L528.4 121.8L530.3 121.4L531.7 121.2L530.5 122.5L529.6 123.4L528.6 124.0L529.3 124.7L530.4 124.9L531.4 125.7L532.4 126.4L534.2 127.2L535.1 128.4L534.7 129.3L532.8 129.8L530.7 130.0L529.3 129.9L527.9 129.5L526.8 129.2L525.8 128.4L524.6 128.4L523.5 128.4L521.6 129.0L520.3 129.7L519.0 129.8ZM543.3 127.0L542.9 125.0L542.3 123.6L544.0 122.6L546.1 122.2L548.2 121.6L550.3 122.2L551.0 123.6L548.9 124.0L548.2 125.0L547.2 125.1L548.2 126.6L549.2 127.0L550.3 127.7L550.7 129.4L552.1 130.0L551.0 131.2L551.7 132.2L552.1 134.2L552.3 135.4L551.0 135.3L549.6 135.8L548.3 135.3L547.1 134.9L546.5 134.1L545.4 133.4L545.8 132.2L547.2 130.8L545.7 129.4L544.4 128.4Z" fill-rule="evenodd" clip-rule="evenodd"/><clipPath id="c56"><use href="#p56"/></clipPath></defs>
<g clip-path="url(#c56)">
<use href="#p56" fill="#5aab5c" stroke="none"/>
<path d="M545.7 122.3L544.7 121.9L542.6 120.1L541.9 119.4L542.6 118.5L542.3 116.9L544.7 117.3L547.5 115.0L550.3 115.3L553.1 116.0L556.6 116.0L559.4 116.4L562.9 116.2L560.8 114.6L562.2 111.9L567.8 111.1L573.4 110.0L576.2 111.5L579.7 112.5L583.9 111.5L586.0 113.2L588.8 116.2L593.0 116.0L596.5 117.9L599.0 118.5L602.8 122.9L595.8 132.6L549.6 132.6L549.6 129.1Z" fill="#c4e3c2"/>
<path d="M599.7 118.5L602.3 117.5L605.6 116.2L609.0 117.2L613.2 117.6L614.6 114.6L619.5 115.5L620.9 116.9L625.1 116.9L627.9 118.2L631.4 118.5L634.9 117.3L637.7 117.1L640.1 117.5L646.1 122.2L630.7 129.8L609.7 129.8L598.6 121.5Z" fill="#c4e3c2"/>
<path d="M576.2 128.0L573.4 129.4L572.0 129.8L570.2 129.5L569.2 127.9L569.2 127.0L567.7 126.1L563.6 126.4L562.2 125.2L558.7 123.4L555.2 124.3L555.2 129.4L553.8 132.6L566.4 136.7L577.6 135.4L580.4 130.5Z" fill="#c4e3c2"/>
<path d="M555.2 129.4L556.6 129.4L558.7 127.5L560.8 128.2L560.9 129.3L563.5 129.7L564.3 131.2L567.1 132.7L569.9 134.8L570.6 138.1L558.0 139.5L549.6 136.0L550.0 128.8L551.7 128.2L553.5 128.4Z" fill="#f4f8f0"/>
<path d="M589.1 128.2L587.4 127.3L583.2 127.0L581.1 126.8L579.7 127.7L576.2 127.6L576.2 128.0L575.1 129.1L577.2 129.1L579.0 130.1L577.6 131.2L575.5 130.9L573.8 131.8L574.8 134.0L583.2 134.7L591.6 131.2Z" fill="#c4e3c2"/>
<path d="M571.7 135.1L572.4 133.6L571.3 131.9L573.8 130.9L575.5 130.8L575.3 129.8L576.2 130.8L575.5 130.9L573.8 131.8L575.6 131.9L577.2 132.0L580.0 131.9L584.6 132.6L584.6 138.1L571.3 138.1Z" fill="#f4f8f0"/>
<path d="M513.3 130.2L513.7 130.0L514.1 129.4L513.8 128.8L514.7 128.3L516.1 128.4L518.9 127.7L525.8 127.7L535.0 129.1L536.3 129.3L537.7 129.7L538.0 130.9L539.5 131.6L539.0 132.0L538.4 132.0L538.8 133.4L538.8 134.1L539.5 135.1L537.0 134.9L536.2 135.2L532.8 135.6L530.0 135.6L528.2 135.6L528.1 136.5L527.2 136.9L525.8 137.0L516.1 137.0L512.6 134.7L512.6 130.9Z" fill="#5aab5c"/>
<path d="M539.5 131.6L539.5 131.9L540.5 132.7L541.4 132.7L541.9 132.7L542.6 132.3L544.4 132.0L544.0 132.9L545.3 133.4L546.8 133.3L552.3 133.3L552.3 134.9L553.5 134.8L555.6 133.8L557.0 133.7L558.7 134.5L560.0 134.7L561.2 135.8L562.3 135.9L562.5 137.3L561.5 138.8L561.5 139.9L562.1 142.3L563.3 143.1L562.1 145.2L563.3 147.0L564.7 147.5L565.3 148.9L565.4 149.6L563.3 150.3L563.0 151.7L558.0 152.9L555.9 150.2L551.0 150.6L546.8 146.4L544.9 145.2L544.0 144.4L543.6 143.7L543.7 142.6L543.2 141.7L541.4 140.9L540.5 139.6L540.5 138.7L541.5 137.2L540.4 136.7L539.5 135.1L538.8 134.1L538.8 133.4L538.4 132.0L539.0 132.0Z" fill="#5aab5c"/>
<path d="M562.5 137.3L561.5 138.8L561.5 139.9L562.1 142.3L563.3 143.1L562.1 145.2L564.3 145.9L566.4 145.9L569.6 145.2L569.8 143.8L571.7 143.1L573.8 142.4L573.8 140.8L575.2 140.5L574.8 139.5L576.3 139.4L577.0 137.8L576.5 136.7L578.3 135.6L581.1 135.4L581.6 135.1L579.4 134.7L577.3 135.8L576.9 134.1L575.1 134.5L574.1 135.2L571.7 135.1L569.9 134.8L568.8 134.7L567.5 135.2L567.1 136.3L565.1 137.0L564.0 137.7Z" fill="#f4f8f0"/>
<path d="M562.1 145.2L564.3 145.9L566.4 145.9L569.6 145.2L569.8 143.8L571.7 143.1L573.8 142.4L573.8 140.8L575.2 140.5L574.8 139.5L576.3 139.4L577.0 137.8L576.5 136.7L578.3 135.6L581.1 135.4L584.6 135.4L587.4 142.3L577.6 156.1L567.8 154.7L563.0 151.7L563.3 150.3L565.4 149.6L565.3 148.9L564.7 147.5L563.3 147.0Z" fill="#5aab5c"/>
<path d="M572.3 153.8L573.1 152.9L576.2 152.8L574.8 151.0L575.2 148.1L577.4 148.0L580.2 145.1L581.2 143.5L581.1 141.3L580.4 140.2L580.2 139.0L581.8 138.5L584.3 138.4L585.7 137.4L591.6 136.7L615.3 145.1L615.3 165.8L588.8 179.7L572.0 158.9Z" fill="#5aab5c"/>
<path d="M588.9 146.7L590.2 144.8L593.0 143.7L600.1 146.4L600.1 150.0L596.9 149.8L594.4 148.7L593.4 148.8Z" fill="#9dd09b"/>
<path d="M601.2 148.8L601.4 149.5L603.5 149.5L605.6 149.3L605.7 148.7L605.0 148.1L605.0 146.4L601.2 146.4Z" fill="#f4f8f0"/>
<path d="M600.1 150.0L600.2 150.9L602.5 150.6L602.5 151.6L606.1 152.0L604.4 153.2L604.4 154.1L605.0 154.7L606.0 153.8L606.4 157.1L606.0 157.8L604.2 158.2L600.7 157.8L601.4 156.4L601.2 154.5L600.9 152.9L600.1 152.7L600.1 151.6Z" fill="#9dd09b"/>
<path d="M606.0 157.8L606.4 157.1L607.2 155.9L607.1 154.7L607.5 153.4L609.2 151.7L610.0 149.8L612.5 148.9L613.0 147.4L618.1 146.4L622.3 158.9L618.1 170.0L614.8 173.0L611.1 173.4L607.0 167.2Z" fill="#f4f8f0"/>
<path d="M614.8 172.5L615.2 171.6L616.2 170.3L615.5 168.3L614.2 165.5L614.8 164.0L613.1 161.0L613.7 159.3L615.3 158.8L616.9 158.3L625.1 157.5L625.1 170.0L621.6 179.7L616.9 177.7L615.3 178.3L613.2 176.2L613.2 173.4Z" fill="#9dd09b"/>
<path d="M616.9 158.3L617.4 158.6L617.4 159.6L618.4 159.6L618.1 161.9L619.5 161.8L620.8 161.4L622.3 161.3L623.5 162.5L623.5 164.0L624.6 165.1L624.4 166.4L625.1 166.8L627.2 166.5L629.3 164.4L627.9 154.7L618.4 154.7L618.4 157.2L617.6 157.8Z" fill="#f4f8f0"/>
<path d="M620.8 170.4L620.1 169.4L620.2 167.8L621.1 166.8L624.0 166.8L624.4 166.4L625.1 166.8L627.2 166.5L629.3 168.6L626.5 174.1L619.5 173.4Z" fill="#f4f8f0"/>
<path d="M619.8 155.4L620.8 156.7L622.2 158.1L623.6 158.5L622.2 159.7L624.0 160.8L626.0 163.2L627.2 164.9L627.2 166.5L627.1 169.4L625.0 170.4L625.4 171.5L623.9 171.5L623.0 172.2L622.3 175.5L633.5 172.8L630.7 152.0L619.8 152.0Z" fill="#c4e3c2"/>
<path d="M616.9 177.7L617.9 177.7L618.3 178.7L619.4 178.4L619.7 178.0L623.7 177.6L623.7 184.4L622.5 184.5L621.8 184.7L616.7 183.8L615.3 178.3Z" fill="#9dd09b"/>
<path d="M659.5 127.9L659.0 127.2L657.3 128.4L655.9 128.4L656.0 129.3L654.4 128.7L653.1 130.0L650.9 131.3L649.6 132.6L650.3 135.4L662.9 135.4L662.9 129.1L659.8 128.2Z" fill="#f4f8f0"/>
<path d="M653.2 134.4L654.1 134.1L654.8 133.6L656.5 133.1L660.1 132.6L660.1 140.2L651.7 140.2L651.7 134.7Z" fill="#5aab5c"/>
<path d="M599.7 118.5L599.0 118.5L596.5 119.7L596.7 121.2L593.0 121.2L592.0 123.6L589.1 124.3L589.9 126.8L589.1 128.2L586.0 129.8L583.9 130.5L580.4 131.1L580.0 131.9L579.8 133.3L581.8 133.3L581.6 135.1L581.1 135.4L582.9 135.8L585.7 137.4L587.2 139.1L588.1 141.3L587.1 143.4L590.2 144.8L591.8 144.9L593.0 146.0L595.8 147.3L597.2 147.8L600.1 148.0L601.2 148.8L602.3 147.5L605.0 148.1L605.6 148.1L607.7 146.9L610.4 146.2L613.0 147.4L613.9 148.4L614.9 148.4L614.9 150.6L613.4 152.3L613.5 153.4L615.1 153.4L616.0 154.9L615.6 156.0L617.0 156.8L618.4 157.2L619.3 157.2L619.1 155.6L619.8 155.4L621.6 155.2L623.7 154.5L626.1 155.0L626.0 156.1L627.9 156.8L628.6 158.9L633.5 160.3L640.5 157.5L648.9 150.6L650.3 134.0L650.9 131.3L653.1 130.0L654.4 128.7L656.0 129.3L655.9 128.4L657.3 128.4L659.0 127.2L659.5 127.9L660.5 126.4L660.4 125.7L661.3 123.9L663.0 124.1L663.6 122.9L665.3 119.7L662.2 120.5L660.1 120.5L659.4 118.9L655.2 117.6L655.2 116.9L653.1 113.5L649.6 112.5L646.1 112.8L645.7 113.9L644.7 115.3L643.7 116.9L641.6 118.0L640.1 117.5L638.4 120.0L639.0 120.5L641.9 120.4L644.4 121.9L641.1 122.3L639.1 123.3L637.0 123.7L635.8 124.6L633.2 124.3L633.4 126.1L630.7 127.5L627.2 127.9L623.7 129.0L619.3 127.7L616.7 127.6L611.7 127.3L610.3 125.2L607.7 124.4L604.2 124.0L604.2 122.9L602.8 120.4L600.0 119.4Z" fill="#1c541a"/>
<path d="M539.5 135.1L540.4 136.7L541.5 137.2L540.5 138.7L540.5 139.6L541.4 140.9L543.2 141.7L543.7 142.6L543.6 143.7L544.0 144.4L544.9 145.2L544.7 147.1L532.8 147.8L527.2 142.3L530.0 136.7L534.9 135.9L536.2 135.2L537.0 134.9Z" fill="#9dd09b"/>
<path d="M536.2 135.2L532.8 135.6L530.0 135.6L528.2 135.6L528.1 136.5L527.2 136.9L525.8 137.4L525.8 142.3L531.4 143.7L531.2 140.3L534.2 139.0L534.5 136.0Z" fill="#dcefd9"/>
<path d="M531.7 142.1L533.4 142.4L535.6 143.5L539.4 146.2L541.9 146.3L543.3 146.4L543.6 147.1L544.6 147.1L547.5 148.5L552.4 150.9L558.0 153.4L563.6 156.1L555.2 170.0L535.6 170.0L523.0 147.8L527.2 145.1Z" fill="#5aab5c"/>
<path d="M526.7 141.3L528.4 141.9L531.2 140.3L531.7 142.1L528.6 143.0L530.0 144.4L529.3 145.1L527.9 145.7L527.2 146.2L525.8 145.9L524.4 145.9L524.4 140.9Z" fill="#c4e3c2"/>
<path d="M524.7 143.2L525.8 145.7L526.4 143.4L526.6 141.7L526.7 141.3L527.0 140.5L526.0 140.8L524.4 140.8L523.7 143.0Z" fill="#5aab5c"/>
<path d="M526.0 140.8L527.0 140.5L528.1 139.2L527.7 138.5L527.1 138.6L525.6 138.5Z" fill="#c4e3c2"/>
<path d="M541.9 146.3L543.3 144.9L544.0 145.1L545.4 145.7L544.6 147.1L543.6 147.1L543.3 146.4Z" fill="#c4e3c2"/>
<path d="M547.9 152.4L547.7 151.3L548.5 150.0L549.5 151.3L549.1 152.5L548.5 152.6Z" fill="#9dd09b"/>
<path d="M549.1 153.2L549.1 152.4L552.4 152.0L554.5 150.6L555.6 150.2L555.8 152.1L555.2 152.3L554.9 153.1L554.1 155.2L550.5 154.9Z" fill="#9dd09b"/>
<path d="M555.8 152.1L555.2 152.3L554.9 153.1L554.1 155.2L554.7 156.1L553.8 158.9L549.6 160.3L551.2 163.6L552.4 165.1L560.8 164.4L562.2 154.7L560.8 153.4L557.3 152.7L556.0 151.8Z" fill="#c4e3c2"/>
<path d="M555.2 149.8L556.2 149.9L555.8 151.1L555.4 151.0Z" fill="#c4e3c2"/>
<path d="M536.8 163.9L537.3 162.5L539.1 162.5L542.2 162.8L543.3 163.1L544.3 161.4L549.6 160.3L551.2 163.6L551.7 165.8L539.8 170.7L535.6 169.3L534.9 164.4Z" fill="#c4e3c2"/>
<path d="M532.8 126.5L536.3 126.8L538.1 127.6L539.8 127.5L541.8 128.6L542.1 129.7L539.8 129.4L537.7 129.7L536.3 129.3L535.0 129.1L533.5 128.4Z" fill="#dcefd9"/>
<path d="M537.7 129.7L539.8 129.4L540.7 130.1L541.1 130.9L541.9 131.9L541.9 132.7L541.4 132.7L540.5 131.9L539.5 131.6L538.0 130.9Z" fill="#dcefd9"/>
<path d="M541.8 128.6L543.0 129.4L543.9 129.5L544.9 128.7L547.5 129.8L547.5 133.4L545.3 133.4L544.0 132.9L544.4 132.0L542.6 132.3L541.9 132.7L541.9 131.9L541.1 130.9L540.7 130.1L539.8 129.4L542.1 129.7Z" fill="#dcefd9"/>
<path d="M539.5 131.6L540.5 131.9L541.4 132.7L540.5 132.7L539.5 131.9Z" fill="#dcefd9"/>
<path d="M517.3 91.0L516.8 91.7L518.9 92.8L517.5 93.9L518.9 95.6L518.4 96.9L519.6 97.7L518.9 98.4L520.9 99.5L518.9 101.0L515.8 102.8L513.3 103.9L507.7 104.3L504.9 103.5L504.9 98.7L510.7 95.5L510.5 94.5L509.8 93.5L509.9 92.6L505.7 90.9L507.0 90.6L510.0 91.3L512.8 90.8L513.3 89.8L516.1 89.5L517.9 90.3Z" fill="#5aab5c"/>
<path d="M505.7 90.9L509.9 92.6L509.8 93.5L510.5 94.5L510.7 95.5L509.1 96.3L506.3 98.0L504.9 99.3L504.2 102.1L504.9 104.2L504.2 107.7L499.3 110.4L493.7 110.4L491.6 106.3L492.6 104.9L493.4 104.5L494.1 103.5L494.8 101.7L494.0 101.1L493.8 98.5L496.6 97.7L496.1 97.1L497.2 96.2L498.4 94.8L500.0 92.7L502.2 91.7L504.9 91.9Z" fill="#5aab5c"/>
<path d="M518.9 90.1L517.5 91.0L517.3 91.0L517.9 90.3L516.1 89.5L513.3 89.8L512.8 90.8L510.0 91.3L507.0 90.6L505.7 90.9L504.9 91.9L502.2 91.7L500.0 92.7L498.4 94.8L497.2 96.2L496.1 97.1L496.6 97.7L493.8 98.5L494.0 101.1L494.8 101.7L494.1 103.5L493.4 104.5L492.6 104.9L491.6 105.6L488.1 106.7L481.1 106.3L481.1 99.3L493.7 91.0L504.9 86.9L521.6 87.6Z" fill="#5aab5c"/>
<path d="M516.1 104.2L515.4 105.2L515.4 106.5L515.1 107.0L513.3 106.5L511.9 106.3L511.0 106.4L509.1 106.3L509.1 103.9L516.1 103.6Z" fill="#c4e3c2"/>
<path d="M515.1 107.0L515.8 107.2L516.3 108.8L514.1 109.5L511.9 108.6L508.8 108.5L506.4 108.9L505.3 108.3L506.3 106.3L509.1 106.3L511.0 106.4L511.9 106.3L513.3 106.5Z" fill="#dcefd9"/>
<path d="M514.1 109.5L514.4 110.0L513.0 110.6L512.8 111.4L511.2 111.9L509.8 111.9L508.8 111.3L508.6 110.6L507.7 110.3L506.5 110.1L505.6 109.7L505.6 108.6L506.4 108.9L508.8 108.5L511.9 108.6Z" fill="#c4e3c2"/>
<path d="M516.3 108.8L518.9 109.3L520.1 109.6L520.3 110.8L522.6 112.5L520.9 112.9L521.4 114.4L519.6 115.5L516.1 115.1L511.9 114.7L509.9 115.3L510.0 113.7L510.3 113.2L509.8 111.9L511.2 111.9L512.8 111.4L513.0 110.6L514.4 110.0L514.1 109.5Z" fill="#c4e3c2"/>
<path d="M521.4 114.4L524.4 114.2L526.5 116.0L526.5 116.8L530.0 117.5L533.0 117.9L532.6 119.0L532.7 120.3L530.5 121.2L529.3 122.9L528.2 123.9L525.8 125.7L520.3 125.0L518.4 124.0L516.3 123.6L517.3 123.0L518.9 122.3L517.7 120.3L515.8 119.4L514.1 119.7L511.7 120.5L508.9 120.1L507.9 119.6L508.5 118.6L508.6 118.0L510.6 116.2L509.9 115.3L511.9 114.7L516.1 115.1L519.6 115.5Z" fill="#c4e3c2"/>
<path d="M514.1 119.7L515.8 119.4L517.7 120.3L518.9 122.3L517.3 123.0L516.3 123.6L516.2 122.2L514.9 120.5Z" fill="#f4f8f0"/>
<path d="M496.8 111.9L497.0 112.8L496.6 113.5L497.5 114.4L497.5 115.3L497.9 116.0L499.7 116.5L500.5 117.1L502.1 117.3L503.2 118.0L504.2 118.0L504.9 118.5L508.5 118.6L508.6 118.0L510.6 116.2L509.9 115.3L510.0 113.7L510.3 113.2L509.8 111.9L508.8 111.3L504.3 111.3L503.5 110.4L496.5 110.4Z" fill="#5aab5c"/>
<path d="M508.9 120.1L511.7 120.5L514.1 119.7L514.9 120.5L516.2 122.2L516.3 123.6L518.4 124.0L518.2 125.0L516.9 126.0L514.7 125.5L512.6 126.1L509.1 125.9L508.6 125.4L508.6 125.0L507.0 124.0L505.3 122.8L506.5 122.6L507.7 120.8Z" fill="#9dd09b"/>
<path d="M508.6 125.4L509.1 125.9L512.6 126.1L514.7 125.5L516.9 126.0L517.5 127.0L516.1 128.4L514.7 128.3L513.8 128.8L513.3 129.4L511.2 129.1L508.9 129.4L509.1 128.8L508.2 128.0L509.1 126.8L508.2 125.7Z" fill="#c4e3c2"/>
<path d="M505.1 131.8L505.8 131.1L506.3 130.0L507.5 129.7L508.9 129.4L511.2 129.1L513.3 129.4L513.8 128.8L514.1 129.4L513.7 130.0L513.3 130.2L511.9 131.2L511.9 136.7L506.3 136.7L504.2 132.6Z" fill="#5aab5c"/>
<path d="M501.0 120.1L503.2 120.4L505.6 119.7L507.9 119.6L508.9 120.1L507.7 120.8L506.5 122.6L505.3 122.8L503.2 123.0L501.4 123.0L500.0 122.2L499.4 121.6L500.8 120.5Z" fill="#9dd09b"/>
<path d="M503.2 118.0L504.2 118.0L504.9 118.5L508.5 118.6L507.9 119.6L505.6 119.7L503.2 120.4L501.0 120.1L500.7 119.3L501.9 118.9Z" fill="#c4e3c2"/>
<path d="M497.6 116.1L497.9 116.0L499.7 116.5L500.5 117.1L502.1 117.3L503.2 118.0L501.9 118.9L500.7 119.3L497.9 118.7L496.2 119.3L494.4 117.8L493.8 116.9L496.9 116.0Z" fill="#5aab5c"/>
<path d="M500.7 119.3L497.9 118.7L496.2 119.3L495.1 120.8L494.0 120.7L491.6 120.8L490.3 120.8L490.3 121.4L491.4 121.6L494.0 121.5L494.2 121.9L496.1 122.2L497.3 122.3L499.4 121.6L500.8 120.5L501.0 120.1Z" fill="#5aab5c"/>
<path d="M487.4 125.9L487.5 125.5L486.7 125.4L486.5 124.1L486.7 123.0L488.6 122.5L489.5 123.2L489.9 122.3L491.4 122.2L491.4 121.6L494.0 121.5L494.2 121.9L496.1 122.2L495.8 122.9L496.2 123.4L495.1 124.0L497.2 126.4L500.7 128.4L504.2 131.2L502.1 133.3L497.9 135.4L496.5 131.9L490.9 128.4L488.1 126.4Z" fill="#3d8f3f"/>
<path d="M496.1 122.2L497.3 122.3L499.4 121.6L500.0 122.2L498.7 122.6L498.9 123.2L498.2 123.6L495.9 123.6L495.8 122.9Z" fill="#c4e3c2"/>
<path d="M495.9 123.6L498.2 123.6L498.9 123.2L498.7 122.6L500.0 122.2L501.4 123.0L503.2 123.0L503.6 124.0L503.5 124.4L500.5 124.0L499.0 124.0L499.0 124.7L499.6 125.4L501.5 127.0L502.8 127.6L502.8 127.9L501.4 128.0L497.9 126.4L495.5 124.7Z" fill="#c4e3c2"/>
<path d="M499.0 124.0L500.5 124.0L503.5 124.4L504.0 125.4L503.7 126.4L502.8 127.6L501.5 127.0L499.6 125.4L499.0 124.7Z" fill="#dcefd9"/>
<path d="M503.6 124.0L503.2 123.0L505.3 122.8L507.0 124.0L508.6 125.0L508.2 125.7L509.1 126.8L508.2 128.0L507.0 128.0L507.2 127.5L505.7 126.8L505.3 127.3L503.7 126.4L504.0 125.4L503.5 124.4Z" fill="#c4e3c2"/>
<path d="M505.0 127.7L505.3 127.3L505.7 126.8L507.2 127.5L507.0 128.0L505.7 128.6Z" fill="#f4f8f0"/>
<path d="M502.8 127.9L502.8 127.6L503.7 126.4L505.3 127.3L505.0 127.7L504.0 128.6L503.5 128.8Z" fill="#f4f8f0"/>
<path d="M504.0 128.6L505.0 127.7L505.7 128.6L505.6 129.4L506.3 130.0L505.8 131.1L505.1 131.8L503.9 131.5L503.5 128.8Z" fill="#f4f8f0"/>
<path d="M505.7 128.6L507.0 128.0L508.2 128.0L509.1 128.8L508.9 129.4L507.5 129.7L506.3 130.0L505.6 129.4Z" fill="#f4f8f0"/>
<path d="M480.4 115.8L480.5 116.2L482.8 117.5L483.6 117.3L485.0 118.0L485.8 118.0L488.4 118.7L487.5 120.7L486.4 120.8L485.3 122.6L486.4 122.3L486.7 123.0L486.5 124.1L486.7 125.4L487.5 125.5L487.4 125.9L487.4 127.3L481.1 128.4L481.4 127.9L479.3 127.7L477.9 127.3L475.9 127.2L474.4 126.5L472.7 125.7L468.5 120.1L474.1 116.7L479.0 115.5Z" fill="#2e7d2e"/>
<path d="M481.4 127.9L479.3 127.7L477.9 127.3L475.9 127.2L474.4 126.5L469.9 125.0L462.9 125.7L464.6 128.7L465.4 128.3L467.7 128.6L468.2 129.0L467.3 129.8L467.3 130.9L467.1 131.6L466.4 131.8L467.1 133.7L466.6 135.1L467.1 136.7L469.3 136.9L474.1 136.7L477.6 134.0L482.5 129.8L482.5 127.9Z" fill="#3d8f3f"/>
<path d="M464.6 128.7L465.4 128.3L467.7 128.6L468.2 129.0L467.3 129.8L467.3 130.9L467.1 131.6L466.4 131.8L467.1 133.7L466.6 135.1L465.7 136.0L462.9 136.0L462.2 128.4Z" fill="#5aab5c"/>
<path d="M485.3 122.6L486.4 120.8L487.5 120.7L488.9 120.4L490.3 120.8L490.3 121.4L491.4 121.6L491.4 122.2L489.9 122.3L489.5 123.2L488.6 122.5L486.7 123.0L486.4 122.3Z" fill="#276b27"/>
<path d="M488.9 110.6L490.7 110.7L492.3 110.8L496.8 111.0L496.8 111.9L497.0 112.8L496.6 113.5L497.5 114.4L497.5 115.3L497.9 116.0L497.6 116.1L496.9 116.0L493.8 116.9L494.4 117.8L496.2 119.3L495.1 120.8L494.0 120.7L491.6 120.8L490.3 120.8L488.9 120.4L487.5 120.7L488.4 118.7L485.8 118.0L485.4 117.2L485.3 116.2L485.2 114.9L486.4 114.7L487.0 112.9L486.7 112.6L486.0 111.1L488.1 110.4Z" fill="#1c541a"/>
<path d="M486.7 112.6L487.0 112.9L486.4 114.7L485.2 114.9L485.3 116.2L484.9 116.2L483.9 115.4L481.7 115.4L481.1 114.6L483.2 112.4L486.0 111.8Z" fill="#276b27"/>
<path d="M480.4 115.8L481.7 115.4L483.9 115.4L484.9 116.2L485.3 116.2L485.4 117.2L485.0 118.0L483.6 117.3L482.8 117.5L480.5 116.2L479.7 115.5Z" fill="#3d8f3f"/>
<path d="M485.4 117.2L485.8 118.0L485.0 118.0Z" fill="#c4e3c2"/>
<path d="M488.9 110.6L490.7 110.7L492.3 110.8L492.3 106.3L487.4 106.3L487.4 110.4Z" fill="#3d8f3f"/>
</g>
<use href="#p56" fill="none"/>
<path d="M513.0 88.1L514.2 87.9L514.7 88.8L516.1 88.3M516.1 88.3L517.3 87.6L518.4 87.8L518.8 89.1L520.3 89.2M520.3 89.2L519.1 89.0L518.9 90.1M518.9 90.1L520.2 90.8L520.8 90.0L522.1 90.3L523.0 90.5M570.6 90.3L570.2 89.5L570.6 88.3M570.6 88.3L570.8 87.4L571.5 86.5L572.7 85.8M615.3 80.8L616.1 80.4L617.3 79.6L618.6 79.7L619.2 79.3L620.5 78.8L621.9 79.4L622.8 79.0M622.8 79.0L623.7 79.7L624.7 80.2L625.2 80.5L626.5 80.6M479.0 117.1L479.1 116.1M507.0 107.0L508.5 106.7M511.0 106.4L511.2 105.7M511.2 105.7L509.8 105.3M509.8 105.3L509.8 104.6M509.8 104.6L510.9 104.8L511.4 104.2M511.4 104.2L512.9 104.8L513.4 103.4L514.7 104.3L516.1 104.2M516.1 104.2L516.8 103.8M516.8 103.8L517.9 104.7L519.1 103.6M519.1 103.6L518.4 104.1L517.5 103.2M517.5 103.2L516.8 102.7M516.8 102.7L515.8 102.8M515.8 102.8L514.4 102.6L514.2 103.1L513.1 102.8L511.9 103.2M511.9 103.2L511.1 104.2L510.0 102.8L509.1 103.6M509.1 103.6L507.9 102.8M507.9 102.8L506.7 102.1M506.7 102.1L507.1 101.4L507.0 100.0M507.0 100.0L506.7 99.1M506.7 99.1L507.6 99.0L508.4 98.2M508.4 98.2L509.7 98.7L510.8 97.9L511.2 96.9M511.2 96.9L512.4 96.4M512.4 96.4L511.8 96.2L510.7 95.5M510.7 95.5L509.8 95.9L509.3 95.0L508.1 95.6M508.1 95.6L507.1 95.6L506.7 97.3M506.7 97.3L505.6 98.4M505.6 98.4L505.2 99.7L504.1 99.9L502.8 99.6M502.8 99.6L502.1 101.0L501.1 100.7M501.1 100.7L500.8 101.5L501.0 102.5M501.0 102.5L501.6 103.3L503.1 103.4M503.1 103.4L502.2 104.5M502.2 104.5L501.7 105.8L500.4 105.6M500.4 105.6L500.1 106.3L499.8 107.7M493.7 106.7L493.6 105.3L492.6 104.9M492.6 104.9L491.9 103.6M491.9 103.6L491.4 104.4L490.2 104.9M490.2 104.9L488.8 105.5L488.1 106.1M488.1 106.1L486.9 105.3L486.1 106.1M486.1 106.1L484.6 106.0L484.6 104.9M484.6 104.9L483.5 104.1L483.9 102.9M483.9 102.9L482.9 102.3L483.9 100.9M483.9 100.9L484.4 99.6L486.0 99.9M486.0 99.9L486.2 98.7L487.7 98.7L488.8 98.7M488.8 98.7L489.5 99.5L490.4 97.6L491.4 98.7M491.4 98.7L490.9 98.0M490.9 98.0L492.3 97.3L493.0 96.6M493.0 96.6L494.1 95.9L494.7 94.9M494.7 94.9L495.7 94.0L496.5 93.4M496.5 93.4L497.1 92.1L498.6 92.1M498.6 92.1L499.4 90.9L500.9 92.1L501.4 91.5M501.4 91.5L502.0 90.6L503.5 90.1M503.5 90.1L504.5 90.6L505.9 90.2L507.0 89.4M507.0 89.4L507.6 88.4L509.0 88.2L509.8 88.5M509.8 88.5L510.7 88.7L512.2 87.7L513.0 88.1" fill="none" stroke-width="1"/>
<path d="M225.2 91.2L226.1 91.6L227.6 91.5L228.5 91.8L229.8 92.5L230.8 92.4L232.0 92.6L233.0 93.2L234.1 93.2L235.4 93.2L236.4 93.8L237.4 94.0L238.2 94.8L239.5 95.1L238.8 96.0L237.7 96.5L236.8 96.8L235.7 97.4L234.8 97.5L233.6 97.0L232.7 97.1L231.5 96.9L230.6 96.7L230.1 95.9L228.8 96.4L227.7 95.9L226.6 95.9L225.2 96.6Z" fill="#5aab5c"/>
<defs><path id="p58" d="M468.9 117.2L469.7 116.6L471.2 116.7L472.0 116.9L473.4 116.3L474.3 117.3L475.5 116.4L476.9 116.7L477.2 115.3L478.7 115.7L477.9 115.3L478.8 114.4L479.3 113.6L478.1 113.0L477.3 113.2L476.9 112.2L475.9 111.9L475.2 111.0L474.7 109.6L473.4 109.0L473.9 107.9L474.1 106.8L473.0 106.9L472.0 106.7L472.6 105.4L471.5 105.1L470.7 105.5L469.9 105.4L470.0 106.3L468.8 107.0L468.3 107.9L469.2 108.6L470.2 109.7L469.9 110.7L470.9 110.7L472.1 110.6L472.7 111.9L472.7 112.8L471.5 112.3L470.6 112.8L471.0 114.0L470.4 114.6L469.6 114.9L470.9 115.0L471.4 114.8L472.4 115.4L472.0 116.0L470.9 115.8L469.9 116.6Z" fill-rule="evenodd" clip-rule="evenodd"/><clipPath id="c58"><use href="#p58"/></clipPath></defs>
<g clip-path="url(#c58)">
<use href="#p58" fill="#1c541a" stroke="none"/>
<path d="M472.4 110.5L474.1 109.3L476.9 109.0L476.9 103.5L465.7 103.5L465.7 111.1L469.9 110.8Z" fill="#5aab5c"/>
<path d="M472.7 112.6L473.1 115.1L472.4 115.5L468.5 115.3L469.9 112.4Z" fill="#5aab5c"/>
</g>
<use href="#p58" fill="none"/>
<path d="M468.9 117.2L470.0 117.3L470.8 116.3L472.0 116.9M472.0 116.9L473.0 117.4L474.5 117.1L475.5 116.4M475.5 116.4L476.6 116.9L477.6 116.2L478.7 115.7M478.7 115.7L477.9 115.3M477.9 115.3L478.6 114.1L479.3 113.6M479.3 113.6L478.1 114.2L477.3 113.2M477.3 113.2L476.9 112.2M476.9 112.2L476.7 111.2L475.2 111.0M475.2 111.0L474.7 109.6M474.7 109.6L473.4 109.0M473.4 109.0L474.1 107.9L474.1 106.8M474.1 106.8L473.1 106.5L472.0 106.7M472.0 106.7L472.6 105.4M472.6 105.4L471.6 106.1L470.7 105.5L469.9 105.4M469.9 105.4L468.8 105.9L468.8 107.0M468.8 107.0L468.5 108.0L469.2 108.6M469.2 108.6L470.2 109.7M470.2 109.7L469.9 110.7M469.9 110.7L470.9 111.1L472.1 110.6M472.1 110.6L472.7 111.9M472.7 111.9L472.7 112.8M472.7 112.8L471.4 113.0L470.6 112.8M470.6 112.8L471.0 114.0M471.0 114.0L470.1 114.1L469.6 114.9M469.6 114.9L470.8 115.4L471.6 114.4L472.4 115.4M472.4 115.4L471.7 115.8L470.9 115.8M470.9 115.8L469.5 116.5L468.9 117.2" fill="none" stroke-width="1"/>
<path d="M466.7 100.3L467.7 100.3L467.4 101.1Z" fill="#5aab5c"/>
<path d="M474.8 102.7L475.5 102.8L475.1 103.6Z" fill="#5aab5c"/>
<path d="M472.3 104.7L473.1 104.7L472.7 105.2Z" fill="#5aab5c"/>
<path d="M472.3 104.7L473.1 104.7M473.1 104.7L472.7 105.2M472.7 105.2L472.3 104.7" fill="none" stroke-width="1"/>
<path d="M466.8 106.0L468.1 105.7L467.4 106.7L466.6 107.4Z" fill="#5aab5c"/>
<path d="M466.8 106.0L468.1 105.7M468.1 105.7L467.4 106.7M467.4 106.7L466.6 107.4M466.6 107.4L466.8 106.0" fill="none" stroke-width="1"/>
<path d="M468.2 114.3L468.1 113.5L468.4 112.5L468.2 111.7L466.7 111.5L465.7 111.1L466.7 110.3L465.3 110.3L464.9 111.4L464.0 112.2L462.9 111.5L463.2 112.8L463.9 113.7L463.0 114.0L462.5 114.6L463.5 115.3L464.7 114.9L465.7 114.9L467.0 114.2Z" fill="#5aab5c"/>
<path d="M468.2 114.3L468.6 113.5L468.4 112.5M468.4 112.5L468.2 111.7M468.2 111.7L466.7 111.5M466.7 111.5L465.7 111.1M465.7 111.1L466.7 110.3M466.7 110.3L465.3 110.3M465.3 110.3L464.9 111.4M464.9 111.4L463.9 111.1L462.9 111.5M462.9 111.5L463.2 112.8M463.2 112.8L463.9 113.7M463.9 113.7L462.7 113.7L462.5 114.6M462.5 114.6L463.5 115.3M463.5 115.3L464.7 114.8L465.7 114.9M465.7 114.9L467.0 115.2L468.2 114.3" fill="none" stroke-width="1"/>
<path d="M468.2 111.7L466.7 111.5L465.7 111.1L466.7 110.3L468.2 110.1L469.2 111.0Z" fill="#9dd09b"/>
<path d="M468.2 111.7L466.7 111.5M466.7 111.5L465.7 111.1M465.7 111.1L466.7 110.3M466.7 110.3L468.2 110.1M468.2 110.1L469.2 111.0M469.2 111.0L468.2 111.7" fill="none" stroke-width="1"/>
<path d="M494.4 134.0L495.8 133.7L497.3 133.8L498.7 133.7L498.2 135.4L497.9 135.8L495.8 135.1L494.4 134.4Z" fill="#3d8f3f"/>
<path d="M488.4 130.0L489.8 129.5L490.6 130.5L490.3 132.3L489.3 132.7L488.6 132.2Z" fill="#3d8f3f"/>
<path d="M488.9 127.9L490.0 127.0L490.2 128.4L489.8 129.3L489.1 128.7Z" fill="#2e7d2e"/>
<path d="M509.8 137.4L511.2 137.4L512.4 137.8L513.7 137.7L513.3 138.1L512.2 138.1L511.2 138.2L509.8 137.8Z" fill="#5aab5c"/>
<path d="M480.3 131.8L481.2 131.3L481.7 131.8L481.1 132.2Z" fill="#3d8f3f"/>
<path d="M522.1 138.1L523.0 137.6L524.3 137.5L525.3 137.2L524.4 138.1L523.0 138.7Z" fill="#c4e3c2"/>
<path d="M492.3 109.5L493.3 109.3L494.5 108.9L494.5 109.6L494.0 110.6L492.6 110.1Z" fill="#3d8f3f"/>
<path d="M490.6 109.7L491.9 109.7L491.9 110.4L490.9 110.3Z" fill="#3d8f3f"/>
<path d="M502.4 107.7L503.5 106.4L503.2 107.2L502.5 107.8Z" fill="#5aab5c"/>
<path d="M503.5 106.4L503.2 107.2" fill="none" stroke-width="1"/>
<path d="M548.9 87.6L550.0 86.9L550.2 86.4L551.0 85.5L551.5 84.7L552.9 84.3L554.3 83.8L554.5 82.7L555.4 82.7L556.7 82.5L557.2 82.2L558.0 81.3L558.8 81.1L559.9 81.3L560.9 81.3L561.9 80.5L563.0 81.5L564.0 81.3L565.0 80.6L566.0 80.0L567.5 80.2L568.4 79.9L569.2 80.9L570.5 79.8L571.7 80.3L572.7 80.0L571.9 80.9L570.6 81.3L569.4 80.8L568.6 81.4L567.3 81.9L566.4 82.3L565.2 82.4L564.4 82.2L563.0 82.4L562.2 82.7L561.4 83.5L559.9 83.5L559.4 84.0L558.0 84.1L557.1 85.3L556.5 85.9L555.2 86.2L555.9 86.7L556.5 88.3L557.3 88.7L556.4 87.9L555.0 88.7L553.8 88.7L552.7 88.2L551.8 88.8L551.0 88.3L550.1 87.7Z" fill="#5aab5c"/>
<path d="M548.9 87.6L549.9 87.6L550.1 86.2L551.0 85.5M551.0 85.5L552.3 85.6L552.4 83.8L553.5 83.6L554.5 82.7M554.5 82.7L555.8 83.1L556.4 81.9L557.5 82.0L558.0 81.3M558.0 81.3L559.0 81.0L559.8 80.3L560.9 80.3L562.2 81.4L562.9 81.2L563.6 80.1L565.0 80.6M565.0 80.6L566.3 80.7L567.3 81.0L568.1 80.8L569.0 80.0L570.3 80.2L571.4 79.5L572.7 80.0M572.7 80.0L571.6 80.8L570.6 81.3M570.6 81.3L569.8 81.9L568.2 80.9L567.3 82.0L566.1 81.2L565.6 81.8L564.3 81.6L563.3 82.1L562.2 82.7M562.2 82.7L561.2 83.5L560.3 83.8L558.6 83.2L558.0 84.1M558.0 84.1L556.7 84.7L556.3 85.1L555.2 86.2M555.2 86.2L555.9 87.2L556.3 88.2L557.3 88.7M557.3 88.7L556.4 88.4L555.1 87.9L553.8 88.7M553.8 88.7L552.8 89.1L551.6 89.2L551.0 88.3M551.0 88.3L550.0 88.0L548.9 87.6" fill="none" stroke-width="1"/>
<path d="M609.7 76.9L611.1 76.9L611.9 76.7L613.1 75.3L613.9 75.1L615.2 74.9L616.1 76.3L617.1 75.3L617.7 75.9L619.4 75.9L620.0 76.6L620.9 76.8L621.7 77.6L623.0 78.2L621.9 77.6L621.0 78.1L619.7 78.9L618.7 79.0L617.7 78.5L616.7 78.6L615.5 78.2L614.4 77.8L613.5 78.7L612.5 77.9L611.9 77.2L610.7 77.4Z" fill="#5aab5c"/>
<path d="M609.7 76.9L610.7 76.9L611.6 76.1L612.7 75.2L613.9 75.1M613.9 75.1L615.0 75.4L616.2 75.5L616.7 75.6L618.1 76.4L618.8 76.6L620.1 76.9L620.9 76.8M620.9 76.8L622.5 77.2L623.0 78.2M623.0 78.2L622.0 77.4L621.0 78.4L619.8 77.8L618.8 78.5L617.7 78.3L616.7 78.6M616.7 78.6L615.7 78.4L614.4 79.0L613.7 78.6L612.5 77.9M612.5 77.9L611.7 77.4L610.6 76.8L609.7 76.9" fill="none" stroke-width="1"/>
<path d="M604.9 75.4L605.8 74.5L606.7 74.5L607.5 74.2L609.0 74.2L609.7 74.1L610.8 74.6L611.9 74.9L613.2 74.8L612.0 74.6L611.3 76.1L609.7 75.8L608.9 76.3L607.9 75.6L606.9 75.7L606.1 75.8Z" fill="#5aab5c"/>
<path d="M604.9 75.4L605.9 75.9L607.0 75.4L608.1 74.7L608.3 73.7L609.7 74.1M609.7 74.1L611.4 73.7L612.1 73.8L613.2 74.8M613.2 74.8L611.8 74.6L611.2 75.5L609.7 75.8M609.7 75.8L609.0 76.3L607.6 76.3L606.7 74.7L606.1 75.9L604.9 75.4" fill="none" stroke-width="1"/>
<path d="M668.5 82.3L669.3 81.3L670.3 81.8L671.7 81.9L672.7 81.1L673.8 81.9L674.7 81.2L675.9 81.3L676.7 81.1L677.6 82.4L678.9 81.6L679.7 82.0L680.9 81.5L681.6 82.4L682.6 82.3L683.6 81.9L684.8 81.8L685.9 83.2L686.7 82.4L685.5 83.1L684.4 82.8L683.4 83.5L682.3 83.0L681.1 83.0L680.2 83.3L678.6 82.7L678.0 82.3L676.4 83.2L675.5 83.0L674.7 82.9L673.0 83.2L671.9 83.1L671.0 83.2L669.9 83.1L668.8 82.8Z" fill="#5aab5c"/>
<path d="M668.5 82.3L669.2 81.5L670.4 82.0L671.3 80.9L672.7 81.1M672.7 81.1L673.3 81.9L674.4 81.2L675.3 82.3L677.0 81.6L677.6 82.2L678.9 82.0L679.7 82.0M679.7 82.0L680.7 82.5L681.5 81.3L682.5 83.0L683.6 82.6L684.4 83.2L685.9 82.6L686.7 82.4M686.7 82.4L685.5 81.7L684.3 82.6L683.6 83.5L682.4 82.8L681.1 83.0M681.1 83.0L679.7 83.0L678.6 83.7L677.5 82.8L676.5 82.5L675.5 83.0M675.5 83.0L674.3 82.9L673.1 83.2L672.1 82.3L671.1 83.6L669.9 83.1M669.9 83.1L668.8 83.1L668.5 82.3" fill="none" stroke-width="1"/>
<path d="M672.7 84.2L673.5 84.0L674.8 84.7L675.6 84.1L676.9 84.7L675.5 85.2L674.4 85.9L673.7 85.1L672.7 84.9Z" fill="#5aab5c"/>
<path d="M672.7 84.2L673.6 84.6L674.9 85.0L675.8 85.2L676.9 84.7M676.9 84.7L675.5 85.2M675.5 85.2L674.8 85.4L673.7 85.0L672.7 84.9M672.7 84.9L672.7 84.2" fill="none" stroke-width="1"/>
<path d="M726.5 87.6L727.5 87.9L728.6 87.6L728.6 88.4L727.8 88.7L726.9 88.5Z" fill="#5aab5c"/>
<path d="M544.4 90.3L545.2 90.4L546.1 90.3L547.2 91.0L546.6 91.5L545.4 91.5L544.3 91.0Z" fill="#5aab5c"/>
<path d="M628.9 160.0L630.0 158.9L632.1 158.9L631.4 160.6L630.0 161.4L628.9 160.8Z" fill="#1c541a"/>
<path d="M646.1 151.7L647.4 152.0L647.1 153.3L646.7 154.5L645.8 156.1L645.0 155.0L645.0 153.6Z" fill="#5aab5c"/>
<path d="M588.5 173.2L589.2 173.3L590.6 174.8L591.4 176.5L591.1 177.6L589.6 178.4L588.8 177.9L588.5 175.7L588.8 174.4Z" fill="#c4e3c2"/>
<defs><path id="p84" d="M468.6 137.0L469.5 136.9L470.9 137.5L472.7 137.7L473.8 138.0L475.5 137.2L476.9 136.9L478.7 136.0L480.0 135.8L481.1 135.6L482.6 135.7L483.9 135.6L485.3 135.3L486.7 135.4L488.9 135.5L490.6 134.9L492.3 135.4L491.6 136.2L491.9 137.4L492.4 138.1L491.0 139.1L492.4 140.6L493.1 140.8L494.1 141.2L495.4 141.0L496.6 141.7L498.2 141.7L498.6 143.0L500.0 143.5L501.4 143.8L502.5 144.0L503.5 144.6L504.9 143.7L504.9 142.0L505.8 141.7L507.0 141.0L508.1 140.9L509.3 141.4L510.7 142.0L511.9 142.8L513.3 143.2L515.1 143.1L516.5 143.2L517.5 143.8L518.9 143.2L520.3 142.8L522.1 143.2L524.2 143.5L524.7 143.2L524.9 144.8L525.7 145.7L525.3 147.1L524.9 148.1L523.9 147.4L523.0 146.4L522.5 145.2L522.2 145.7L522.6 147.1L523.7 148.1L524.3 149.2L525.1 151.0L526.1 152.1L526.5 153.4L526.8 154.7L528.5 156.1L528.9 157.5L529.1 159.5L530.2 160.4L530.7 161.7L531.4 163.4L532.1 165.1L532.9 166.1L534.2 166.5L535.2 167.4L536.2 168.3L537.2 169.0L537.6 170.1L536.6 170.5L537.5 170.8L539.1 172.2L539.8 172.2L541.1 171.5L542.6 171.2L544.0 171.4L545.4 170.9L547.2 170.7L548.5 170.0L548.4 172.1L547.6 173.2L547.4 174.2L546.8 175.5L546.1 177.0L545.4 178.3L544.6 179.3L544.0 180.4L543.3 181.3L542.2 182.4L541.2 183.1L540.2 183.8L538.8 184.7L537.7 185.9L536.5 186.8L535.6 187.7L534.9 189.0L533.5 190.1L532.8 191.4L532.3 192.3L531.7 193.1L531.2 194.9L531.9 196.0L531.9 197.1L532.1 198.4L532.4 200.4L533.4 201.1L533.4 202.6L533.7 203.9L533.6 205.3L533.7 206.7L534.0 207.4L533.3 208.3L532.6 209.5L531.1 210.2L529.3 211.1L528.7 212.0L527.7 212.8L526.8 213.6L525.7 214.0L525.7 215.3L526.3 216.4L526.7 217.6L526.5 219.1L526.4 220.3L524.6 220.9L523.0 221.6L522.5 222.6L522.9 223.9L522.9 225.2L522.3 226.1L521.4 227.1L520.3 228.0L519.4 228.7L518.9 230.0L517.6 230.7L516.8 232.0L515.8 232.6L514.7 233.1L512.7 233.7L511.4 234.1L509.8 233.8L507.7 234.0L506.1 234.2L504.9 234.8L502.8 234.1L502.5 232.3L502.4 230.5L501.5 229.5L501.1 228.1L500.0 226.2L498.9 225.4L498.2 224.0L498.0 222.6L497.9 221.2L497.4 219.8L497.2 218.3L496.7 216.4L495.6 215.0L495.3 213.8L494.4 212.6L493.7 211.5L493.4 210.4L493.4 208.5L494.2 206.9L494.4 205.3L495.8 203.8L495.7 202.7L496.2 201.4L495.8 200.0L495.4 198.8L494.7 197.5L494.7 196.3L494.1 195.0L494.0 194.5L493.7 193.5L492.4 192.0L491.7 191.0L490.5 189.9L489.5 188.9L489.2 187.6L490.2 186.3L489.9 185.1L490.6 183.4L490.5 181.8L489.3 180.4L488.8 180.1L486.7 180.5L485.3 180.6L484.5 179.8L483.9 178.6L482.8 178.2L481.7 177.7L480.7 177.9L479.1 178.0L478.6 178.2L476.9 178.8L475.7 179.6L474.1 180.1L472.6 179.5L471.2 179.2L469.9 179.5L468.2 180.0L466.4 180.5L465.4 179.7L464.3 179.5L462.9 178.9L461.8 177.9L460.8 177.0L459.8 175.9L458.4 175.0L458.3 174.1L457.7 173.1L456.6 172.3L455.9 171.5L454.8 170.2L453.5 169.6L453.4 168.5L453.4 167.8L452.4 166.2L453.3 165.4L453.8 164.4L453.9 162.9L454.5 161.7L453.8 159.6L453.1 157.5L454.1 156.0L454.5 154.1L455.2 153.0L456.1 152.0L456.6 150.3L457.7 149.5L458.7 148.2L459.8 147.8L460.8 147.3L461.8 146.4L462.9 145.7L463.3 144.2L463.2 143.0L463.8 141.5L465.0 140.5L466.3 140.1L467.4 139.4L468.5 137.7Z" fill-rule="evenodd" clip-rule="evenodd"/><clipPath id="c84"><use href="#p84"/></clipPath></defs>
<g clip-path="url(#c84)">
<use href="#p84" fill="#dcefd9" stroke="none"/>
<path d="M473.8 138.0L474.5 139.9L475.1 141.9L472.7 142.6L471.9 143.8L469.9 145.1L467.1 145.7L464.7 146.9L464.7 148.8L470.2 152.0L478.6 157.4L478.6 157.9L481.4 159.2L481.5 160.3L482.8 160.1L485.0 159.6L487.4 157.7L493.7 154.1L490.9 152.7L490.0 150.3L490.6 149.9L490.7 147.1L490.2 144.6L489.5 142.1L487.4 140.6L487.4 139.5L488.5 138.1L488.9 135.5L488.1 134.0L474.1 135.4Z" fill="#c4e3c2"/>
<path d="M473.8 138.0L474.5 139.9L475.1 141.9L472.7 142.6L471.9 143.8L469.9 145.1L467.1 145.7L464.7 146.9L464.7 148.2L458.4 148.2L455.9 147.8L461.5 139.5L468.5 135.4L474.1 136.7Z" fill="#c4e3c2"/>
<path d="M464.7 148.2L464.7 150.6L460.1 150.6L460.1 154.1L458.7 154.7L458.7 157.1L453.1 157.1L450.3 157.5L454.5 147.8L458.4 148.2Z" fill="#f4f8f0"/>
<path d="M488.9 135.5L488.5 138.1L487.4 139.5L487.4 140.6L489.5 142.1L490.2 144.6L491.3 143.7L491.2 142.7L493.1 141.6L493.1 140.8L495.1 139.5L493.7 134.0L488.9 134.0Z" fill="#c4e3c2"/>
<path d="M493.1 140.8L493.1 141.6L491.2 142.7L491.3 143.7L490.2 144.6L490.7 147.1L490.6 149.9L490.0 150.3L490.9 152.7L493.7 154.1L496.8 155.3L497.9 154.7L510.5 159.6L510.5 158.9L511.9 158.9L511.9 156.1L511.9 146.2L511.4 144.8L511.9 142.8L511.9 139.5L492.3 139.5Z" fill="#c4e3c2"/>
<path d="M511.9 142.8L511.4 144.8L511.9 146.2L511.9 156.1L528.5 156.1L530.0 156.1L527.2 145.1L525.8 141.6L511.9 141.6Z" fill="#5aab5c"/>
<path d="M464.7 148.8L470.2 152.0L467.8 152.0L469.2 165.1L463.9 165.1L461.9 165.3L460.8 165.0L459.8 166.1L458.0 164.3L456.6 163.6L453.8 164.4L451.7 164.4L451.7 157.1L458.7 157.1L458.7 154.7L460.1 154.1L460.1 150.6L464.7 150.6Z" fill="#f4f8f0"/>
<path d="M470.2 152.0L478.6 157.4L478.6 157.9L481.4 159.2L481.5 160.3L482.8 160.1L482.8 163.2L481.8 165.3L478.7 165.4L477.2 166.0L475.9 165.7L474.1 166.9L472.7 167.6L470.9 168.5L470.7 169.6L469.5 170.3L469.2 172.2L468.2 171.8L465.7 172.5L465.3 171.4L464.3 169.4L462.5 169.7L461.0 169.4L459.8 166.1L460.8 165.0L461.9 165.3L463.9 165.1L469.2 165.1L467.8 152.0Z" fill="#dcefd9"/>
<path d="M459.8 166.1L458.0 164.3L456.6 163.6L453.8 164.4L451.0 165.8L452.4 170.0L453.5 169.6L457.7 169.0L461.0 169.4Z" fill="#c4e3c2"/>
<path d="M453.4 168.5L455.9 168.3L457.6 168.2L457.6 167.8L455.9 167.5L453.4 167.8L452.4 168.0Z" fill="#dcefd9"/>
<path d="M457.7 169.0L453.5 169.6L453.1 171.4L455.9 171.5L457.7 170.4Z" fill="#f4f8f0"/>
<path d="M461.0 169.4L457.7 169.0L457.7 170.4L455.9 171.5L455.2 173.4L458.3 174.1L459.4 172.9L461.2 172.8L462.1 174.0L462.5 174.8L463.6 175.0L463.9 176.4L465.0 176.1L465.9 174.8L465.7 172.5L465.3 171.4L464.3 169.4L462.5 169.7Z" fill="#f4f8f0"/>
<path d="M458.3 174.1L459.4 172.9L461.2 172.8L462.1 174.0L462.5 174.8L460.8 177.0L458.7 177.6L457.3 174.8Z" fill="#dcefd9"/>
<path d="M462.5 174.8L463.6 175.0L463.9 176.4L465.0 176.1L465.3 177.7L466.4 178.6L466.4 180.5L465.7 181.8L460.1 177.6L460.8 177.0Z" fill="#f4f8f0"/>
<path d="M465.0 176.1L465.9 174.8L465.7 172.5L468.2 171.8L469.2 172.2L470.6 173.2L473.1 173.3L473.0 173.4L473.4 175.2L472.4 176.9L473.0 177.6L472.6 179.5L472.7 181.1L466.4 181.8L466.4 180.5L466.4 178.6L465.3 177.7Z" fill="#c4e3c2"/>
<path d="M477.2 166.0L475.9 165.7L474.1 166.9L472.7 167.6L470.9 168.5L470.7 169.6L469.5 170.3L469.2 172.2L470.6 173.2L473.1 173.3L472.8 171.4L476.8 171.2L478.2 171.4L479.7 170.8L480.3 170.1L480.3 169.6L480.0 169.1L478.3 168.0Z" fill="#c4e3c2"/>
<path d="M473.1 173.3L472.8 171.4L476.8 171.2L477.6 172.8L477.5 174.4L477.9 176.2L478.6 178.2L478.3 180.4L472.7 181.1L472.6 179.5L473.0 177.6L472.4 176.9L473.4 175.2L473.0 173.4Z" fill="#c4e3c2"/>
<path d="M476.8 171.2L478.2 171.4L478.0 172.2L479.1 174.1L479.1 178.0L478.9 179.0L478.6 178.2L477.9 176.2L477.5 174.4L477.6 172.8Z" fill="#dcefd9"/>
<path d="M478.2 171.4L479.7 170.8L480.3 170.1L480.3 169.6L480.8 169.6L481.9 170.4L482.2 172.1L480.8 174.1L480.7 177.9L480.4 179.0L479.1 178.7L479.1 178.0L479.1 174.1L478.0 172.2Z" fill="#dcefd9"/>
<path d="M482.8 160.1L485.0 159.6L487.4 157.7L493.7 154.1L496.8 155.3L497.9 154.7L498.2 156.8L499.1 158.3L498.6 163.2L497.0 164.9L495.9 167.6L494.4 168.5L491.9 168.0L489.5 168.9L486.7 168.6L485.3 167.6L482.6 167.9L482.1 169.1L481.9 170.4L480.8 169.6L480.3 169.6L480.0 169.1L478.3 168.0L477.2 166.0L478.7 165.4L481.8 165.3L482.8 163.2Z" fill="#f4f8f0"/>
<path d="M481.9 170.4L482.1 169.1L482.6 167.9L485.3 167.6L486.7 168.6L489.5 168.9L491.9 168.0L494.4 168.5L495.9 167.6L496.6 168.5L497.3 170.7L495.5 172.6L494.8 174.4L493.4 176.9L491.6 176.9L490.6 177.2L489.2 179.0L488.8 180.1L488.1 181.8L481.1 179.7L480.7 177.9L480.8 174.1L482.2 172.1Z" fill="#9dd09b"/>
<path d="M497.9 154.7L510.5 159.6L510.5 164.9L508.9 165.1L508.4 167.1L507.9 169.0L508.9 170.8L508.9 171.5L507.2 171.9L505.4 174.0L503.3 174.4L501.7 175.7L498.6 176.2L498.2 174.8L496.5 172.9L498.6 172.8L497.9 170.0L497.2 168.7L496.6 168.5L495.9 167.6L497.0 164.9L498.6 163.2L499.1 158.3L498.2 156.8Z" fill="#f4f8f0"/>
<path d="M511.9 156.1L528.5 156.1L530.0 156.1L531.4 161.7L530.7 161.7L528.6 163.1L527.9 166.8L527.4 169.0L526.0 170.3L524.9 171.9L524.6 173.4L524.6 174.7L523.0 175.7L525.4 177.3L526.3 179.1L527.1 180.2L524.4 180.8L523.0 181.3L521.5 181.6L520.0 181.8L518.2 180.5L515.2 179.5L513.8 177.5L512.1 175.8L510.5 174.6L509.9 173.0L508.9 171.5L508.9 170.8L507.9 169.0L508.4 167.1L508.9 165.1L510.5 164.9L510.5 159.6L510.5 158.9L511.9 158.9Z" fill="#c4e3c2"/>
<path d="M530.7 161.7L528.6 163.1L527.9 166.8L529.9 166.0L531.4 166.4L532.8 166.5L534.5 167.3L536.2 169.3L537.2 169.0L538.4 168.6L532.8 163.1L531.4 161.0Z" fill="#f4f8f0"/>
<path d="M537.2 169.0L536.2 169.3L535.4 171.4L536.8 171.5L537.5 170.8L538.4 170.3Z" fill="#f4f8f0"/>
<path d="M527.9 166.8L529.9 166.0L531.4 166.4L532.8 166.5L534.5 167.3L536.2 169.3L535.4 171.4L536.8 171.5L537.0 172.1L538.4 174.1L542.6 175.5L544.0 175.5L539.8 179.7L537.0 180.0L535.5 181.2L534.2 181.2L532.1 181.9L530.2 181.6L528.5 180.5L527.1 180.2L526.3 179.1L525.4 177.3L523.0 175.7L524.6 174.7L524.6 173.4L524.9 171.9L526.0 170.3L527.4 169.0Z" fill="#c4e3c2"/>
<path d="M536.8 171.5L537.5 170.8L538.4 170.0L549.6 168.6L549.6 174.1L539.8 186.6L534.9 190.1L534.9 189.0L534.2 187.7L534.2 182.7L535.5 181.2L537.0 180.0L539.8 179.7L544.0 175.5L542.6 175.5L538.4 174.1L537.0 172.1Z" fill="#f4f8f0"/>
<path d="M524.4 180.8L527.1 180.2L528.5 180.5L530.2 181.6L532.1 181.9L534.2 181.2L535.5 181.2L534.2 182.7L534.2 187.7L534.9 189.0L535.6 190.8L532.8 194.2L531.7 193.1L529.6 191.4L529.5 190.8L524.4 188.0L524.3 186.5L525.1 185.1L525.8 184.0L525.0 181.5Z" fill="#c4e3c2"/>
<path d="M520.0 181.8L521.5 181.6L523.0 181.3L524.4 180.8L525.0 181.5L525.8 184.0L525.1 185.1L524.3 186.5L524.4 188.0L519.6 188.1L518.3 188.5L518.4 186.7L518.9 185.5L520.7 183.6Z" fill="#c4e3c2"/>
<path d="M524.4 188.0L529.5 190.8L529.6 191.4L531.7 193.1L534.2 193.5L534.2 200.4L533.4 201.1L530.0 202.3L527.9 202.8L525.7 202.7L524.4 199.8L522.9 199.6L519.8 198.0L518.2 194.9L517.9 192.7L518.9 192.7L520.0 191.2L519.6 189.9L520.1 189.8L519.6 188.1Z" fill="#c4e3c2"/>
<path d="M518.3 188.5L519.6 188.1L520.1 189.8L519.6 189.9L518.7 190.5L517.5 190.3Z" fill="#dcefd9"/>
<path d="M517.5 190.3L518.7 190.5L519.6 189.9L520.0 191.2L518.9 192.7L517.9 192.7Z" fill="#f4f8f0"/>
<path d="M508.9 171.5L509.9 173.0L510.5 174.6L512.1 175.8L513.8 177.5L515.2 179.5L511.2 179.5L508.2 180.9L504.2 179.5L502.9 180.5L502.9 181.8L500.1 181.8L499.4 183.6L498.2 181.5L497.3 179.7L497.2 178.0L498.6 176.2L501.7 175.7L503.3 174.4L505.4 174.0L507.2 171.9Z" fill="#f4f8f0"/>
<path d="M496.6 168.5L497.2 168.7L497.9 170.0L498.6 172.8L496.5 172.9L498.2 174.8L498.6 176.2L497.2 178.0L497.3 179.7L498.2 181.5L499.4 183.6L495.5 183.6L492.7 183.6L490.6 183.4L488.8 183.1L488.1 180.4L488.8 180.1L489.2 179.0L490.6 177.2L491.6 176.9L493.4 176.9L494.8 174.4L495.5 172.6L497.3 170.7Z" fill="#c4e3c2"/>
<path d="M492.7 183.6L492.7 185.2L490.3 185.2L489.2 184.5L490.6 183.4Z" fill="#f4f8f0"/>
<path d="M495.5 183.6L495.4 184.8L496.9 184.8L497.2 187.3L496.3 189.9L494.4 189.8L493.1 189.8L493.5 191.4L492.4 192.0L489.5 190.8L488.1 187.3L490.3 185.2L492.7 185.2L492.7 183.6Z" fill="#c4e3c2"/>
<path d="M499.4 183.6L500.1 181.8L502.9 181.8L502.2 183.6L501.8 186.2L500.4 188.3L499.6 189.6L499.3 191.4L498.3 192.6L497.0 193.4L495.8 193.2L495.1 193.0L494.5 193.5L493.7 193.5L491.6 192.8L492.4 192.0L493.5 191.4L493.1 189.8L494.4 189.8L496.3 189.9L497.2 187.3L496.9 184.8L495.4 184.8L495.5 183.6Z" fill="#c4e3c2"/>
<path d="M502.9 181.8L502.9 180.5L504.2 179.5L508.2 180.9L511.2 179.5L515.2 179.5L518.2 180.5L520.0 181.8L520.7 183.6L518.9 185.5L518.4 186.7L518.3 188.5L517.5 190.3L517.9 192.7L518.2 194.9L519.8 198.0L517.3 198.4L516.6 199.5L516.9 201.1L516.6 202.9L518.6 203.5L518.6 205.2L516.5 203.8L514.9 202.9L512.3 202.1L511.0 202.4L510.5 201.7L508.1 202.1L507.4 199.8L507.4 196.7L505.6 196.3L504.0 197.5L500.7 196.7L500.1 194.8L495.1 194.8L494.1 195.0L493.4 194.9L494.0 194.6L494.1 194.6L494.9 194.8L495.2 193.0L495.8 193.2L497.0 193.4L498.3 192.6L499.3 191.4L499.6 189.6L500.4 188.3L501.8 186.2L502.2 183.6Z" fill="#c4e3c2"/>
<path d="M494.1 195.0L495.1 194.8L500.1 194.8L500.7 196.7L504.0 197.5L505.6 196.3L507.4 196.7L507.4 199.8L508.1 202.1L510.5 201.7L510.5 204.6L507.7 204.6L507.7 209.0L509.6 211.0L506.3 211.4L502.8 210.7L496.5 210.7L495.8 210.1L493.4 210.4L490.9 210.1L490.9 200.4L493.0 194.9Z" fill="#f4f8f0"/>
<path d="M494.0 194.6L493.7 193.5L494.5 193.5L495.2 193.0L494.9 194.8L494.1 194.6L493.0 194.2Z" fill="#f4f8f0"/>
<path d="M519.8 198.0L522.9 199.6L523.5 201.6L523.0 203.9L522.6 205.4L523.3 206.0L519.1 207.1L519.4 208.2L517.3 208.6L514.7 211.4L512.3 211.3L509.6 211.0L507.7 209.0L507.7 204.6L510.5 204.6L510.5 201.7L511.0 202.4L512.3 202.1L514.9 202.9L516.5 203.8L518.6 205.2L518.6 203.5L516.6 202.9L516.9 201.1L516.6 199.5L517.3 198.4Z" fill="#c4e3c2"/>
<path d="M522.9 199.6L524.4 199.8L525.7 202.7L525.0 203.5L525.3 205.2L527.0 206.7L527.1 208.8L526.3 210.3L525.0 209.2L524.9 207.4L523.3 206.0L522.6 205.4L523.0 203.9L523.5 201.6Z" fill="#c4e3c2"/>
<path d="M533.4 201.1L530.0 202.3L527.9 202.8L525.7 202.7L525.0 203.5L525.3 205.2L527.0 206.7L527.1 208.8L526.3 210.3L525.0 209.2L524.9 207.4L523.3 206.0L519.1 207.1L519.4 208.2L520.7 208.8L522.9 209.7L523.0 211.5L522.6 212.9L523.0 214.3L522.2 216.1L520.7 217.6L521.6 220.5L521.5 222.5L521.8 223.7L522.9 223.9L524.4 224.0L528.6 219.8L527.2 214.3L535.6 207.4L535.6 200.4Z" fill="#c4e3c2"/>
<path d="M512.3 211.3L514.7 211.4L517.3 208.6L519.4 208.2L520.7 208.8L522.9 209.7L523.0 211.5L522.6 212.9L523.0 214.3L522.2 216.1L520.7 217.6L518.0 217.3L515.6 215.0L513.5 212.9Z" fill="#c4e3c2"/>
<path d="M512.3 211.3L513.5 212.9L515.6 215.0L518.0 217.3L515.4 218.9L514.5 219.4L512.6 222.1L509.1 221.6L508.4 222.9L506.0 223.7L504.9 220.9L504.9 217.1L506.3 217.1L506.3 211.9L509.8 212.2L511.2 211.5Z" fill="#c4e3c2"/>
<path d="M493.4 210.4L495.8 210.1L496.5 210.7L502.8 210.7L506.3 211.4L509.6 211.0L512.3 211.3L511.2 211.5L509.8 212.2L506.3 211.9L506.3 217.1L504.9 217.1L504.9 220.9L504.9 225.9L503.5 226.6L501.4 226.3L500.0 226.2L497.9 226.8L490.9 211.5Z" fill="#c4e3c2"/>
<path d="M500.0 226.2L501.4 226.3L503.5 226.6L504.9 225.9L504.9 220.9L506.0 223.7L508.4 222.9L509.1 221.6L512.6 222.1L514.5 219.4L515.4 218.9L518.0 217.3L520.7 217.6L521.6 220.5L521.5 222.5L520.7 222.2L520.0 223.0L520.3 224.4L521.8 223.7L522.9 223.9L524.4 225.4L516.1 236.5L500.7 236.5L497.9 228.1Z" fill="#5aab5c"/>
<path d="M521.5 222.5L521.8 223.7L520.3 224.4L520.0 223.0L520.7 222.2Z" fill="#f4f8f0"/>
<path d="M514.7 227.6L516.1 226.5L517.9 227.2L517.6 228.1L516.3 229.0L515.2 228.6Z" fill="#f4f8f0"/>
</g>
<use href="#p84" fill="none"/>
<path d="M545.8 203.2L546.0 205.1L546.9 206.4L547.2 208.1L546.5 210.1L546.0 211.5L545.8 213.0L545.1 214.3L544.7 215.6L544.5 217.2L544.1 218.6L543.3 219.8L541.9 221.5L539.8 221.9L538.4 221.2L538.0 219.6L537.5 217.8L538.5 216.0L538.8 214.3L538.5 212.6L538.4 210.8L538.8 209.7L539.8 208.8L541.9 208.3L542.9 207.4L543.7 206.7L544.0 205.6L544.7 204.6Z" fill="#dcefd9"/>
<path d="M453.4 147.3L454.2 147.0L453.8 147.8Z" fill="#3d8f3f"/>
<path d="M454.8 147.7L455.4 147.7L455.2 148.1Z" fill="#3d8f3f"/>
<path d="M456.9 147.0L457.6 146.7L457.3 147.7Z" fill="#3d8f3f"/>
<path d="M443.6 165.4L444.2 165.4L444.0 166.0Z" fill="#f4f8f0"/>
<path d="M441.5 162.9L442.1 162.9L441.8 163.3Z" fill="#f4f8f0"/>
<path d="M486.0 186.0L486.4 186.2L486.1 186.6Z" fill="#f4f8f0"/>
<path d="M488.8 181.5L489.3 181.5L489.1 182.0Z" fill="#f4f8f0"/>
<path d="M537.3 202.5L537.7 202.7L537.6 203.2Z" fill="#f4f8f0"/>
<path d="M539.8 204.2L540.2 204.3L540.0 204.6Z" fill="#f4f8f0"/>
<path d="M557.2 214.3L557.7 214.6L557.3 215.0Z" fill="#f4f8f0"/>
<path d="M554.2 215.5L554.9 215.8L554.5 216.2Z" fill="#f4f8f0"/>
<path d="M672.8 129.3L673.3 128.2L672.5 127.6L673.3 126.8L674.6 126.6L675.0 125.7L674.3 124.8L675.1 124.0L675.5 123.6L676.2 124.3L677.0 124.1L677.6 125.2L678.6 125.8L680.1 125.2L680.5 126.6L679.5 126.6L678.3 127.2L677.8 127.9L677.2 128.6L676.2 127.5L675.2 127.6L674.3 127.5L673.5 127.7L674.2 128.7Z" fill="#5aab5c"/>
<path d="M674.1 129.1L674.8 130.5L675.5 131.8L675.3 132.6L674.8 133.6L673.9 134.4L674.1 135.4L673.5 136.3L673.9 137.2L673.1 137.2L672.7 138.1L672.4 137.3L671.6 137.8L671.0 138.7L670.2 138.7L669.4 138.4L668.5 138.7L668.1 138.1L668.3 139.1L667.9 140.3L666.8 140.3L665.8 139.6L666.2 138.5L665.5 138.6L664.7 139.0L663.6 139.0L662.9 139.7L661.9 139.4L661.0 139.3L660.0 139.5L660.6 139.0L661.5 138.2L662.3 137.6L663.3 138.0L664.1 137.4L665.0 137.3L666.4 137.4L667.1 136.7L667.6 136.1L668.1 135.5L668.9 134.7L668.8 135.6L670.1 135.5L670.6 134.8L670.9 133.8L671.8 133.7L672.5 132.3L672.7 131.2L672.5 130.4L673.1 129.5Z" fill="#5aab5c"/>
<path d="M662.0 140.2L662.9 139.5L663.5 139.1L664.6 139.0L665.3 139.8L664.6 140.5L663.7 140.2L662.9 141.3L662.2 140.9Z" fill="#5aab5c"/>
<path d="M660.0 139.6L661.1 140.1L661.3 141.2L660.9 141.8L660.8 142.8L659.7 143.7L659.0 143.1L659.1 142.0L658.3 141.3L658.1 140.5L659.1 140.1Z" fill="#5aab5c"/>
<path d="M676.5 111.3L677.2 112.8L677.2 113.9L677.3 115.3L676.9 116.9L677.2 118.2L678.8 118.7L679.2 119.2L678.1 120.1L676.9 121.1L677.6 122.8L676.5 121.9L675.5 122.9L675.5 120.8L675.6 118.7L675.6 116.7L675.1 115.6L675.1 114.3L675.2 112.6Z" fill="#5aab5c"/>
<path d="M645.5 161.0L646.9 161.3L647.8 161.0L648.0 161.6L648.1 162.6L647.1 163.3L646.9 164.6L647.0 165.4L646.9 166.4L648.2 166.9L649.1 167.3L650.2 167.5L650.1 168.1L650.4 169.1L649.3 168.6L648.2 167.9L647.1 167.3L645.5 167.5L645.5 166.5L644.8 166.1L645.0 165.2L644.4 164.2L645.3 163.6L645.3 162.4Z" fill="#c4e3c2"/>
<path d="M647.6 177.0L647.9 175.5L648.9 174.8L649.6 174.7L651.0 174.8L651.5 174.1L652.3 173.0L653.1 173.6L653.5 174.8L653.2 175.6L653.8 176.6L653.4 177.9L652.7 176.9L652.0 177.8L652.3 178.8L651.7 178.2L650.6 178.0L650.3 176.5L649.3 176.2L648.6 176.2Z" fill="#c4e3c2"/>
<path d="M650.7 169.3L652.1 169.3L652.3 170.3L652.7 171.1L652.3 171.8L651.7 172.5L651.4 170.9L650.4 170.2Z" fill="#c4e3c2"/>
<path d="M647.5 170.3L648.4 171.0L649.0 170.7L648.3 172.1L647.5 172.1L647.1 170.9Z" fill="#c4e3c2"/>
<path d="M648.9 171.5L649.7 171.6L650.2 173.0L649.2 174.0L648.2 173.3L648.3 172.3Z" fill="#c4e3c2"/>
<path d="M640.8 175.0L641.7 174.3L642.6 173.7L642.8 172.5L644.1 172.2L644.1 171.1L643.6 171.9L642.7 172.8L642.2 173.9L641.5 174.1Z" fill="#c4e3c2"/>
<path d="M645.3 168.0L646.7 168.3L646.7 169.6L645.8 169.6L645.3 169.1Z" fill="#c4e3c2"/>
<path d="M610.2 178.8L611.3 178.8L612.1 178.8L613.2 179.4L613.4 180.3L614.4 180.8L614.9 181.3L616.1 181.5L616.5 182.4L617.1 183.0L617.9 183.6L619.3 184.2L620.4 184.6L621.1 185.9L621.5 187.0L622.1 188.0L622.1 188.8L623.2 189.2L624.5 189.7L625.1 190.8L625.5 192.0L625.0 192.8L625.1 193.8L624.9 194.6L624.1 194.2L623.2 194.6L622.8 193.5L621.6 193.1L620.9 192.5L620.0 192.0L619.1 191.6L618.7 190.4L618.0 189.6L617.4 188.9L617.2 187.8L616.6 187.3L615.6 186.8L615.3 185.8L615.2 185.1L614.9 184.2L614.0 183.8L613.4 183.0L612.2 182.5L611.8 181.5L610.7 181.0L610.3 180.0Z" fill="#9dd09b"/>
<path d="M624.0 196.0L624.4 195.3L625.1 194.8L626.5 194.8L627.6 195.5L628.6 195.6L629.7 195.3L630.7 195.6L631.4 196.2L631.8 195.5L632.9 196.1L634.4 196.2L635.2 196.9L636.2 196.9L637.0 197.3L637.0 198.6L636.1 198.0L634.9 198.1L634.0 197.8L633.0 197.7L632.1 198.1L631.2 198.4L630.3 197.4L629.3 197.3L628.3 197.2L627.2 197.3L626.2 197.2L625.7 196.8L624.6 196.8Z" fill="#9dd09b"/>
<path d="M643.9 194.2L643.8 193.3L644.4 192.4L644.0 191.4L643.0 190.5L643.7 189.6L643.7 188.4L643.9 187.3L644.4 186.7L644.4 185.5L645.8 184.8L646.8 184.7L647.6 185.5L648.6 185.2L650.0 185.3L651.0 184.9L652.0 184.4L652.0 185.3L651.0 185.9L649.9 186.2L648.9 185.9L648.1 185.6L646.9 186.4L646.1 186.0L645.0 186.3L644.8 187.8L645.9 187.6L646.8 187.8L647.9 187.9L649.3 187.7L649.5 188.0L648.9 188.7L647.8 188.8L647.1 189.2L647.6 190.0L648.1 191.0L648.8 191.7L649.2 192.8L649.0 193.8L648.3 194.2L647.2 193.2L646.8 192.1L646.2 191.5L646.0 190.5L645.1 190.8L645.7 191.9L645.4 192.9L645.3 194.2Z" fill="#9dd09b"/>
<path d="M649.6 200.9L650.0 199.9L651.0 199.3L651.7 198.9L651.7 200.3L650.3 200.9Z" fill="#9dd09b"/>
<path d="M644.6 198.2L645.7 198.5L646.8 198.2L647.6 197.8L648.8 197.8L648.6 198.5L647.4 198.9L646.1 198.9L644.6 198.8Z" fill="#9dd09b"/>
<path d="M640.2 198.2L641.2 198.2L642.3 198.1L643.3 198.4L642.6 198.9L641.4 198.7L640.5 199.1Z" fill="#9dd09b"/>
<path d="M637.0 197.8L637.8 197.4L638.7 198.0L640.1 198.2L639.8 198.9L638.7 198.5L638.0 198.8L637.0 198.2Z" fill="#9dd09b"/>
<path d="M643.3 199.6L644.2 199.2L645.0 199.8L645.8 200.6L644.3 200.6Z" fill="#9dd09b"/>
<path d="M655.2 183.8L655.9 183.6L656.9 184.5L656.2 184.8L655.9 185.9L655.6 186.8L656.5 187.7L655.6 187.0L655.3 186.2L655.3 185.2Z" fill="#9dd09b"/>
<path d="M655.9 190.8L656.9 190.7L658.0 190.5L659.1 190.9L659.8 191.2L659.1 191.4L658.0 191.4L656.8 191.2L656.0 191.3Z" fill="#9dd09b"/>
<path d="M653.1 191.0L654.5 190.9L654.8 191.6L653.4 191.9Z" fill="#9dd09b"/>
<path d="M624.0 189.1L625.4 188.8L625.7 189.9L626.1 190.6L624.9 190.1Z" fill="#9dd09b"/>
<path d="M664.6 194.2L665.4 194.6L665.0 196.0L664.4 195.3Z" fill="#9dd09b"/>
<path d="M660.5 197.0L661.1 196.7L660.8 197.7Z" fill="#9dd09b"/>
<path d="M612.7 184.7L613.4 185.1L613.7 185.8L613.1 185.4Z" fill="#9dd09b"/>
<path d="M614.8 188.0L615.6 188.7L615.3 189.1L614.9 188.5Z" fill="#9dd09b"/>
<defs><path id="p125" d="M630.2 183.8L631.3 184.2L632.1 184.4L632.7 183.1L634.0 183.2L634.9 182.2L635.5 181.1L636.3 180.4L637.4 179.7L638.4 179.0L639.4 177.9L640.2 176.9L641.1 176.9L641.5 177.9L642.1 178.6L642.8 179.2L643.6 179.4L643.1 180.0L642.2 180.6L641.4 180.9L641.6 181.8L641.4 182.4L641.9 183.4L642.1 184.6L643.2 185.2L641.8 185.5L641.0 186.3L641.2 187.3L640.6 188.0L639.8 188.7L639.8 190.1L639.1 191.4L638.1 192.2L637.3 192.3L637.0 191.3L635.9 191.3L634.9 191.0L634.1 191.6L633.2 191.4L631.8 191.3L631.0 190.6L630.8 189.5L630.9 188.7L630.1 187.9L629.5 187.3L629.3 185.9L629.3 184.5Z" fill-rule="evenodd" clip-rule="evenodd"/><clipPath id="c125"><use href="#p125"/></clipPath></defs>
<g clip-path="url(#c125)">
<use href="#p125" fill="#9dd09b" stroke="none"/>
<path d="M630.2 183.8L630.3 184.5L631.4 185.4L633.2 185.2L634.2 184.5L635.6 184.8L637.2 184.5L637.7 183.1L638.6 181.8L638.8 180.6L641.4 180.9L644.7 181.1L644.7 175.5L633.5 178.3L627.9 182.4Z" fill="#9dd09b"/>
<path d="M636.3 180.4L637.4 179.3L638.3 179.7L638.0 180.6L637.2 181.1Z" fill="#f4f8f0"/>
</g>
<use href="#p125" fill="none"/>
<defs><path id="p126" d="M660.0 187.8L661.1 187.8L662.2 187.2L663.1 187.6L664.4 187.8L664.3 188.9L664.7 190.1L665.4 191.2L666.4 191.3L667.1 190.2L667.8 189.6L669.2 189.6L669.9 188.8L671.0 189.5L672.0 189.6L673.3 189.8L674.1 190.2L675.4 190.3L676.2 191.0L677.5 191.1L678.3 191.9L679.5 192.3L679.7 193.6L680.8 193.8L681.7 194.6L683.2 194.9L683.6 195.9L682.5 196.0L683.2 197.4L684.0 198.4L684.6 199.1L685.6 199.6L686.7 200.4L687.8 201.3L686.9 201.5L686.0 200.9L684.7 200.2L683.6 200.4L682.5 199.6L681.4 199.0L681.1 197.8L680.1 197.1L679.0 197.1L678.4 197.9L677.6 198.1L676.9 199.3L675.9 198.9L674.9 198.9L674.1 199.2L673.1 198.8L672.4 197.8L671.3 198.2L670.2 198.2L670.1 197.1L671.0 196.3L670.2 195.6L669.9 194.2L669.1 193.6L668.1 193.5L667.1 193.0L666.4 192.4L665.3 191.9L664.3 192.0L662.9 192.1L662.6 191.2L661.5 190.5L662.7 190.0L663.9 189.9L662.7 190.2L661.8 189.6L661.2 188.7L660.1 188.5Z" fill-rule="evenodd" clip-rule="evenodd"/><clipPath id="c126"><use href="#p126"/></clipPath></defs>
<g clip-path="url(#c126)">
<use href="#p126" fill="#9dd09b" stroke="none"/>
<path d="M674.1 189.4L674.1 200.4L689.5 203.2L689.5 189.4Z" fill="#f4f8f0"/>
</g>
<use href="#p126" fill="none"/>
<path d="M651.7 198.9L652.0 198.5L652.8 197.9L653.9 198.3L654.8 198.2L653.8 199.1L652.6 199.7L651.7 200.3Z" fill="#f4f8f0"/>
<path d="M684.3 194.2L685.4 194.0L686.7 194.1L688.0 193.5L688.8 192.6L689.7 192.4L689.7 193.5L689.3 194.4L688.1 194.9L686.9 195.4L686.0 195.3L685.5 194.7L684.4 194.8Z" fill="#dcefd9"/>
<path d="M687.8 190.2L688.6 190.3L689.5 191.2L690.4 191.7L690.9 192.8L690.4 193.0L689.4 192.4L688.8 191.0Z" fill="#dcefd9"/>
<path d="M693.1 194.1L694.4 194.9L694.9 196.0L693.9 195.7L693.4 194.8Z" fill="#dcefd9"/>
<path d="M695.7 196.3L696.4 197.1L697.1 197.1L696.4 197.4Z" fill="#f4f8f0"/>
<path d="M699.9 199.5L701.1 199.7L701.8 200.2L700.2 200.2Z" fill="#f4f8f0"/>
<path d="M701.5 198.2L701.8 198.8L702.5 199.6L701.9 199.5Z" fill="#f4f8f0"/>
<path d="M702.5 200.9L703.9 201.4L702.9 201.4Z" fill="#f4f8f0"/>
<path d="M698.5 197.1L699.3 198.1L700.4 198.2L699.5 198.1Z" fill="#f4f8f0"/>
<path d="M709.9 207.4L710.7 208.1L710.2 208.3Z" fill="#f4f8f0"/>
<path d="M710.7 208.8L711.6 209.5L711.0 209.6Z" fill="#f4f8f0"/>
<path d="M712.1 211.0L712.5 211.3L712.1 211.4Z" fill="#f4f8f0"/>
<path d="M724.8 210.7L726.7 210.8L726.7 211.8L725.0 211.7Z" fill="#f4f8f0"/>
<path d="M726.9 209.3L728.6 209.0L727.9 209.9Z" fill="#f4f8f0"/>
<path d="M679.1 167.8L679.7 167.9L679.4 168.3Z" fill="#f4f8f0"/>
<path d="M698.0 176.9L698.4 177.0L698.1 177.3Z" fill="#f4f8f0"/>
<path d="M689.0 176.2L689.5 176.4L689.2 176.6Z" fill="#f4f8f0"/>
<path d="M664.8 175.9L665.3 176.1L665.0 176.5Z" fill="#f4f8f0"/>
<path d="M235.3 205.3L237.1 205.7L236.0 206.0Z" fill="#f4f8f0"/>
<path d="M231.6 215.8L232.2 215.8L231.9 216.2Z" fill="#f4f8f0"/>
<path d="M718.5 184.5L719.0 184.7L718.8 185.1Z" fill="#f4f8f0"/>
<path d="M716.0 176.6L716.6 176.8L716.3 177.0Z" fill="#f4f8f0"/>
<path d="M706.2 214.4L707.0 215.2L708.3 215.7L709.5 216.2L710.4 217.5L709.5 217.5L708.5 216.8L707.4 216.1Z" fill="#2e7d2e"/>
<path d="M676.2 201.4L677.0 201.9L676.8 203.4L677.6 203.9L677.5 205.2L678.0 206.4L678.9 207.0L680.1 207.2L680.4 208.6L680.8 210.0L681.4 211.1L681.5 212.6L682.2 213.2L683.2 214.1L684.6 214.4L685.5 216.0L686.6 217.0L687.8 218.0L687.8 219.1L688.9 219.8L689.8 220.6L690.7 221.6L690.8 222.9L691.1 224.0L691.7 225.1L691.7 226.2L691.2 227.5L690.9 228.8L690.7 230.2L690.2 231.2L689.1 232.1L688.5 233.4L687.7 234.9L686.9 236.2L686.6 237.3L686.5 238.5L685.3 239.2L683.9 239.1L682.7 240.1L681.5 240.8L679.7 239.6L679.5 239.1L678.8 239.9L677.6 240.3L676.1 240.3L674.8 239.8L673.7 239.1L672.7 238.5L672.3 236.5L670.6 235.9L670.6 234.8L670.2 233.4L669.6 232.3L669.6 231.6L668.5 233.3L667.1 234.8L666.4 234.8L665.3 233.8L664.6 232.3L663.9 231.1L662.5 231.1L661.5 230.9L660.4 230.2L658.9 230.0L657.3 230.5L655.8 230.7L654.6 231.1L653.1 231.3L651.9 231.7L650.6 232.3L649.6 233.6L647.9 233.4L646.4 233.5L644.7 233.6L643.5 234.6L641.9 235.1L640.6 235.2L639.1 234.8L637.7 234.1L638.7 232.7L638.7 230.9L638.2 229.8L637.7 228.8L637.1 227.7L637.2 226.5L636.8 224.7L635.9 223.4L635.5 222.2L635.5 220.4L636.0 219.1L636.0 217.8L636.6 216.8L637.2 217.8L638.2 217.1L639.2 216.2L640.1 215.1L641.5 214.8L642.8 214.7L644.7 214.2L645.7 213.3L646.9 212.5L647.8 211.5L647.9 210.1L649.7 210.6L649.7 209.5L651.0 208.1L651.9 207.1L652.8 206.4L654.2 205.7L655.9 207.1L656.2 207.7L658.0 207.2L658.4 205.3L659.8 203.8L661.0 203.8L662.2 203.4L662.3 202.3L663.8 203.2L665.7 203.5L666.9 203.3L668.2 203.5L667.8 205.3L667.2 206.3L666.4 207.1L667.3 207.8L668.5 208.5L669.7 209.4L671.3 210.1L672.6 210.5L673.8 210.8L673.9 209.1L674.8 207.4L675.0 205.8L674.9 204.3L675.3 203.2L675.6 201.8Z" fill="#276b27"/>
<path d="M679.2 243.0L680.5 242.9L681.8 243.5L682.9 243.1L684.1 243.2L684.3 245.0L683.7 246.4L682.2 247.0L680.4 246.0L679.9 245.0Z" fill="#276b27"/>
<path d="M659.1 202.4L660.5 202.3L660.8 202.8L659.4 202.9Z" fill="#276b27"/>
<path d="M667.6 205.7L668.3 205.9L668.1 206.4Z" fill="#276b27"/>
<path d="M667.9 236.2L669.3 235.9L670.0 236.3L668.5 236.5Z" fill="#276b27"/>
<path d="M718.4 234.2L719.2 235.1L720.6 235.5L720.6 236.7L721.3 237.6L722.3 237.3L722.9 238.5L723.8 238.8L724.7 239.2L725.7 238.4L726.5 238.8L725.6 239.8L725.7 240.9L724.4 241.2L724.3 242.4L723.6 243.1L722.7 243.9L722.0 244.2L721.3 243.8L721.1 242.9L721.8 242.3L721.3 241.3L719.9 241.0L721.2 240.2L721.3 239.0L721.5 237.9L720.6 237.2L719.7 236.5L719.1 235.4Z" fill="#5aab5c"/>
<path d="M718.4 242.7L719.3 243.5L720.6 243.8L720.1 244.8L719.8 245.3L718.8 245.6L718.5 246.8L718.8 247.4L717.4 247.5L716.4 248.0L716.2 248.9L715.6 250.2L715.1 250.9L713.9 251.1L713.2 251.6L712.3 251.1L711.3 250.9L710.4 250.6L709.7 250.3L710.4 248.9L711.5 248.2L712.3 247.5L713.1 247.0L713.8 246.3L714.6 246.3L715.7 245.9L716.4 245.0L717.3 244.5L717.6 243.4Z" fill="#5aab5c"/>
<path d="M711.3 251.4L712.1 251.6L711.6 252.0Z" fill="#5aab5c"/><g stroke="none">
<rect x="218" y="62" width="14.4" height="42.6" rx="7.2" fill="#064206"/>
<rect x="210.8" y="75.8" width="29.6" height="14" rx="7" fill="#064206"/>
<path d="M225.2 64.5L229.3 72.6L221.1 72.6Z" fill="#fff"/>
<path d="M225.2 101.8L229.3 93.6L221.1 93.6Z" fill="#fff"/>
<path d="M213 82.8L220.6 78.6L220.6 87Z" fill="#fff"/>
<path d="M238.2 82.8L230.4 78.6L230.4 87Z" fill="#fff"/>
<rect x="218" y="108.8" width="14.4" height="43.2" rx="7.2" fill="#064206"/>
<rect x="221.6" y="115.7" width="7.2" height="1.8" fill="#fff"/><rect x="224.3" y="113" width="1.8" height="7.2" fill="#fff"/>
<rect x="221.6" y="143.2" width="7.2" height="1.8" fill="#fff"/>
<g fill="none" stroke="#9d9de6" stroke-width="0.7"><circle cx="225.2" cy="130.2" r="6.2" fill="#14402a"/><ellipse cx="225.2" cy="130.2" rx="3" ry="6.2"/><path d="M219 130.2H231.4M225.2 124V136.4M220 127H230.4M220 133.4H230.4"/></g>
</g></svg>
 <div style="position:absolute;left:6px;top:318.5px;width:122px;height:16px;background:linear-gradient(90deg,#fff 0%,#e2f0e0 20%,#97ca95 45%,#3a913a 70%,#107a10 87%,#004a00 100%)"></div>
 <div style="position:absolute;left:7.5px;top:319px;font-size:9.5px;color:#000">0</div>
 <div style="position:absolute;left:80px;top:319px;font-size:9.5px;color:#000">75,100</div>
 <div class="hr" style="top:343px"></div>
 <div class="t" style="left:16px;top:352px">Report View by Selection</div>
 <div class="t lnk" style="left:498px;top:352px">Customize</div>
 <table>
 <colgroup><col style="width:48px"><col style="width:120px"><col style="width:91px"><col style="width:92px"><col style="width:97px"><col style="width:121px"></colgroup>
 <tr><th style="text-align:left;padding-left:10px">Total:<br>&nbsp;&nbsp;<span style="margin-left:2px">8</span></th><th style="text-align:left;padding-left:16px">Research Fields</th><th>Web of Science<br>Documents</th><th style="color:#5a8ab0;text-align:left;padding-left:27px">Cites <span style="display:inline-block;width:0;height:0;border-left:3.5px solid transparent;border-right:3.5px solid transparent;border-top:4px solid #6aa3d8;vertical-align:2px;margin-left:1px"></span></th><th style="text-align:left;padding-left:15px">Cites/Paper</th><th style="text-align:left;padding-left:25px">Top Papers</th></tr>
 <tr class="o" style="height:27px"><td class="n" style="padding-right:2px">1</td><td style="padding-left:16px"><a>CLINICAL<br>MEDICINE</a></td><td class="n">3,977</td><td class="n" style="padding-right:3px">39,398</td><td class="n" style="padding-right:6px">9.91</td><td><div class="bar"><b style="width:78px"></b><span style="color:#fff">32</span></div></td></tr>
 <tr style="height:38px"><td class="n" style="padding-right:2px">2</td><td style="padding-left:16px"><a>MOLECULAR<br>BIOLOGY &amp;<br>GENETICS</a></td><td class="n">848</td><td class="n" style="padding-right:3px">17,546</td><td class="n" style="padding-right:6px">20.69</td><td><div class="bar"><b style="width:12px"></b><span>5</span></div></td></tr>
 <tr class="o" style="height:28.5px"><td class="n" style="padding-right:2px">3</td><td style="padding-left:16px"><a>BIOLOGY &amp;<br>BIOCHEMISTRY</a></td><td class="n">930</td><td class="n" style="padding-right:3px">16,070</td><td class="n" style="padding-right:6px">17.28</td><td><div class="bar"><b style="width:36px"></b><span>15</span></div></td></tr>
 <tr style="height:37.5px"><td class="n" style="padding-right:2px">4</td><td style="padding-left:16px"><a>PHARMACOLOG<br>Y &amp;<br>TOXICOLOGY</a></td><td class="n">1,067</td><td class="n" style="padding-right:3px">15,558</td><td class="n" style="padding-right:6px">14.58</td><td><div class="bar"><b style="width:29px"></b><span>12</span></div></td></tr>
 <tr class="o" style="height:22.5px"><td class="n" style="padding-right:2px">5</td><td style="padding-left:16px"><a>CHEMISTRY</a></td><td class="n">588</td><td class="n" style="padding-right:3px">8,901</td><td class="n" style="padding-right:6px">15.14</td><td><div class="bar"><b style="width:7px"></b><span>3</span></div></td></tr>
 <tr style="height:27px"><td class="n" style="padding-right:2px">6</td><td style="padding-left:16px"><a>NEUROSCIENCE<br>&amp; BEHAVIOR</a></td><td class="n">471</td><td class="n" style="padding-right:3px">7,990</td><td class="n" style="padding-right:6px">16.96</td><td><div class="bar"><b style="width:22px"></b><span>9</span></div></td></tr>
 <tr class="o" style="height:21px"><td class="n" style="padding-right:2px">7</td><td style="padding-left:16px"><a>IMMUNOLOGY</a></td><td class="n">443</td><td class="n" style="padding-right:3px">5,742</td><td class="n" style="padding-right:6px">12.96</td><td><div class="bar"><b style="width:17px"></b><span>7</span></div></td></tr>
 </table>
</div>
</body></html>
